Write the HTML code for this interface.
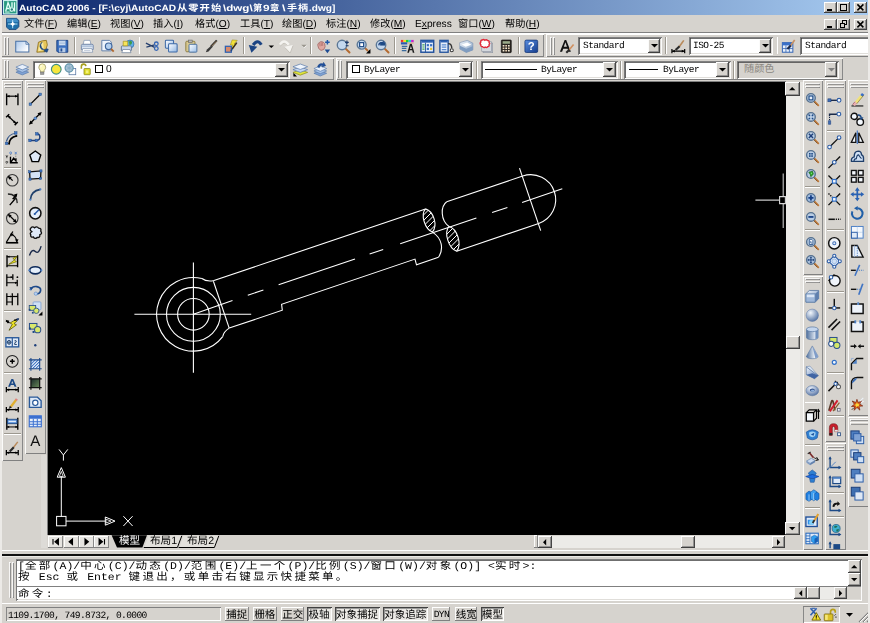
<!DOCTYPE html>
<html lang="zh-CN"><head><meta charset="utf-8"><title>AutoCAD 2006</title>
<style>
html,body{margin:0;padding:0;background:#d6d3ce;}
body{text-rendering:geometricPrecision;width:870px;height:623px;overflow:hidden;font-family:"Liberation Sans","Noto Sans CJK SC",sans-serif;font-size:10.2px;color:#000}
#scr{position:relative;width:870px;height:623px;overflow:hidden;background:#d6d3ce}
.a{position:absolute;white-space:nowrap}
svg.a{overflow:visible}
.cj{font-family:"Liberation Sans","Noto Sans CJK SC",sans-serif}
.title{background:linear-gradient(90deg,#0a246a 0%,#a6caf0 100%)}
.ttl{color:#fff;font-weight:bold;font-size:9px}
.ttl .cj{letter-spacing:0.1em}
.mn{font-size:10.2px}
.mn u{text-decoration-thickness:0.8px;text-underline-offset:1px}
.mono{font-family:"Liberation Mono",monospace;font-size:9.5px;letter-spacing:-0.55px;position:absolute;top:0;line-height:18px;white-space:nowrap}
.tb{box-shadow:inset 0.9px 0.9px 0 #fff,inset -0.9px -0.9px 0 #808080}
.gr{box-shadow:inset 0.8px 0.8px 0 #fff,inset -0.8px -0.8px 0 #808080;background:#d6d3ce}
.btn{background:#d6d3ce;box-shadow:inset -0.9px -0.9px 0 #404040,inset 0.9px 0.9px 0 #fff,inset -1.8px -1.8px 0 #808080}
.btn1{background:#d6d3ce;box-shadow:inset -0.9px -0.9px 0 #808080,inset 0.9px 0.9px 0 #fff}
.fld{background:#fff;box-shadow:inset 0.9px 0.9px 0 #808080,inset -0.9px -0.9px 0 #fff,inset 1.8px 1.8px 0 #404040,inset -1.8px -1.8px 0 #d6d3ce}
.fld.dis{background:#d6d3ce}
.trk{background:#ecebe8}
.sk1{box-shadow:inset 0.9px 0.9px 0 #808080,inset -0.9px -0.9px 0 #fff}
.sup{box-shadow:inset -0.9px -0.9px 0 #808080,inset 0.9px 0.9px 0 #fff}
.sdn{box-shadow:inset 0.9px 0.9px 0 #404040,inset -0.9px -0.9px 0 #fff,inset 1.8px 1.8px 0 #808080;background:#eae8e4}
.st{font-family:"Liberation Mono",monospace;font-size:9.6px;letter-spacing:-0.62px;white-space:pre}
.st2{font-size:10.5px}
.tabt{font-size:10.6px;line-height:12.6px;height:12.6px}
.cmd{position:absolute;left:1px;font-family:"Liberation Mono","Noto Sans CJK SC",monospace;font-size:10.4px;line-height:11px;height:11px;white-space:pre;letter-spacing:0;transform:scaleX(1.108);transform-origin:0 0}
.cmd .cj{letter-spacing:0.2em}
.ttl,.mn,.mono,.st,.st2,.cmd,.tabt{will-change:transform}
</style></head>
<body>
<div id="scr">
<div class="a title" style="left:2px;top:0px;width:866.2px;height:15.3px;"></div>
<svg class="a ic" style="left:2.9px;top:0.4px" width="14.4" height="14.4" viewBox="0 0 16 16"><rect x="0.5" y="0.5" width="15" height="15" fill="#2a9a80" stroke="#c9f1ee" stroke-width="1.4" /><path d="M3 12.6 5.6 3 8.2 9.4M3.8 9.4H7" fill="none" stroke="#e4fff8" stroke-width="1.5" /><path d="M10 2.6V8M12.8 2.6V12.8" fill="none" stroke="#e4fff8" stroke-width="1.5" /><circle cx="9.8" cy="10.6" r="2" fill="#2a7a7a" stroke="#e4fff8" stroke-width="1.2"/><path d="M2.4 13.4H7.4" fill="none" stroke="#e4fff8" stroke-width="1" /></svg>
<div class="a ttl" id="ts0" style="left:18.8px;top:0.6px;height:15px;line-height:15px;transform:scaleX(1.126);transform-origin:0 0">AutoCAD 2006 - [F:\cyj\AutoCAD</div>
<div class="a ttl" id="ts1" style="left:176.6px;top:0.6px;height:15px;line-height:15px;transform:scaleX(1.1425);transform-origin:0 0"><span class="cj">从零开始</span></div>
<div class="a ttl" id="ts2" style="left:222.6px;top:0.6px;height:15px;line-height:15px;transform:scaleX(1.287);transform-origin:0 0">\dwg\</div>
<div class="a ttl" id="ts3" style="left:252.8px;top:0.6px;height:15px;line-height:15px;transform:scaleX(1.0313);transform-origin:0 0"><span class="cj">第</span></div>
<div class="a ttl" id="ts4" style="left:263.2px;top:0.6px;height:15px;line-height:15px;transform:scaleX(1.3159);transform-origin:0 0">9</div>
<div class="a ttl" id="ts5" style="left:270.2px;top:0.6px;height:15px;line-height:15px;transform:scaleX(1.0313);transform-origin:0 0"><span class="cj">章</span></div>
<div class="a ttl" id="ts6" style="left:281.7px;top:0.6px;height:15px;line-height:15px;transform:scaleX(1.4);transform-origin:0 0">\</div>
<div class="a ttl" id="ts7" style="left:286.8px;top:0.6px;height:15px;line-height:15px;transform:scaleX(1.1223);transform-origin:0 0"><span class="cj">手柄</span></div>
<div class="a ttl" id="ts8" style="left:309.2px;top:0.6px;height:15px;line-height:15px;transform:scaleX(1.1234);transform-origin:0 0">.dwg]</div>
<div class="a btn" style="left:824.3px;top:2.2px;width:13px;height:11px;"></div>
<div class="a " style="left:827.3px;top:9.4px;width:5px;height:1.7px;background:#000"></div>
<div class="a btn" style="left:837.3px;top:2.2px;width:13px;height:11px;"></div>
<div class="a " style="left:839.5px;top:3.8px;width:7.6px;height:7.2px;border:0.9px solid #000;border-top-width:1.8px;box-sizing:border-box"></div>
<div class="a btn" style="left:853.7px;top:2.2px;width:13px;height:11px;"></div>
<svg class="a" style="left:853.7px;top:2.2px" width="13" height="11" viewBox="0 0 12.6 11"><path d="M3.2 2.4 9.2 8.4M9.2 2.4 3.2 8.4" stroke="#000" stroke-width="1.5" fill="none"/></svg>
<svg class="a ic" style="left:5.6px;top:17px" width="13.4" height="13.4" viewBox="0 0 16 16"><path d="M0.6 1.6H12.6L15.4 4.2V11.6L12 15H3.6L0.6 12z" fill="#1f6fa8" stroke="#0e3b73" stroke-width="0.9" /><path d="M1.2 2.2H12.2L14.6 4.4V6H1.2z" fill="#3f8fc8" /><path d="M8 3.4V13.4M2.4 8.4H13.6" fill="none" stroke="#bfe8ff" stroke-width="1.1" /><path d="M8 5.4 9.2 7.2 11 8.4 9.2 9.6 8 11.4 6.8 9.6 5 8.4 6.8 7.2z" fill="#fff" /></svg>
<div class="a mn" style="left:24px;top:16.8px;height:16px;line-height:16px"><span class="cj">文件</span>(<u>F</u>)</div>
<div class="a mn" style="left:66.6px;top:16.8px;height:16px;line-height:16px"><span class="cj">编辑</span>(<u>E</u>)</div>
<div class="a mn" style="left:109.9px;top:16.8px;height:16px;line-height:16px"><span class="cj">视图</span>(<u>V</u>)</div>
<div class="a mn" style="left:152.9px;top:16.8px;height:16px;line-height:16px"><span class="cj">插入</span>(<u>I</u>)</div>
<div class="a mn" style="left:194.6px;top:16.8px;height:16px;line-height:16px"><span class="cj">格式</span>(<u>O</u>)</div>
<div class="a mn" style="left:240px;top:16.8px;height:16px;line-height:16px"><span class="cj">工具</span>(<u>T</u>)</div>
<div class="a mn" style="left:282.2px;top:16.8px;height:16px;line-height:16px"><span class="cj">绘图</span>(<u>D</u>)</div>
<div class="a mn" style="left:326.3px;top:16.8px;height:16px;line-height:16px"><span class="cj">标注</span>(<u>N</u>)</div>
<div class="a mn" style="left:369.8px;top:16.8px;height:16px;line-height:16px"><span class="cj">修改</span>(<u>M</u>)</div>
<div class="a mn" style="left:414.6px;top:16.8px;height:16px;line-height:16px">E<u>x</u>press</div>
<div class="a mn" style="left:458.3px;top:16.8px;height:16px;line-height:16px"><span class="cj">窗口</span>(<u>W</u>)</div>
<div class="a mn" style="left:504.6px;top:16.8px;height:16px;line-height:16px"><span class="cj">帮助</span>(<u>H</u>)</div>
<div class="a btn" style="left:824.3px;top:18.8px;width:13px;height:11px;"></div>
<div class="a " style="left:827.3px;top:26px;width:5px;height:1.7px;background:#000"></div>
<div class="a btn" style="left:837.3px;top:18.8px;width:13px;height:11px;"></div>
<div class="a " style="left:841.5px;top:20.3px;width:5.2px;height:4.6px;border:0.9px solid #000;border-top-width:1.6px;box-sizing:border-box"></div>
<div class="a " style="left:839.7px;top:23px;width:5.2px;height:4.6px;border:0.9px solid #000;border-top-width:1.6px;box-sizing:border-box;background:#d6d3ce"></div>
<div class="a btn" style="left:853.7px;top:18.8px;width:13px;height:11px;"></div>
<svg class="a" style="left:853.7px;top:18.8px" width="13" height="11" viewBox="0 0 12.6 11"><path d="M3.2 2.4 9.2 8.4M9.2 2.4 3.2 8.4" stroke="#000" stroke-width="1.5" fill="none"/></svg>
<div class="a " style="left:0px;top:33px;width:870px;height:0.9px;background:#fff"></div>
<div class="a " style="left:0px;top:32.2px;width:870px;height:0.9px;background:#808080"></div>
<div class="a tb" style="left:1px;top:34px;width:543px;height:22.5px;"></div>
<div class="a gr" style="left:3.6px;top:36.5px;width:2.4px;height:18px;"></div>
<div class="a gr" style="left:6.8px;top:36.5px;width:2.4px;height:18px;"></div>
<svg class="a ic" style="left:14.7px;top:38.7px" width="14.6" height="14.6" viewBox="0 0 16 16"><defs><linearGradient id="gn" x1="0" y1="0" x2="1" y2="0.6"><stop offset="0" stop-color="#a9c6ea"/><stop offset="1" stop-color="#ffffff"/></linearGradient></defs><path d="M0.8 2.6H12L15.2 5.8V14.2H0.8z" fill="url(#gn)" stroke="#4a72a6" stroke-width="1.1" /><path d="M12 2.6V5.8H15.2z" fill="#f4f8fd" stroke="#4a72a6" stroke-width="0.9" /></svg>
<svg class="a ic" style="left:34.7px;top:38.7px" width="14.6" height="14.6" viewBox="0 0 16 16"><path d="M2 14.5 3.8 3.5 8 2 12.5 1.5 13.5 6.5 11 14z" fill="#e6c65a" stroke="#8a6d1c" stroke-width="0.9" /><path d="M3.5 13.5 5 5 9 3.5 9.6 12z" fill="#f7e9a6" /><path d="M8 3.8A4.2 4.2 0 1 0 12.6 10.6L14.6 11.2 13.2 14.6 9.6 13.2 11.2 12A6 6 0 0 1 6.6 4.4z" fill="#1c4f94" stroke="#0a2e63" stroke-width="0.5" /></svg>
<svg class="a ic" style="left:54.7px;top:38.7px" width="14.6" height="14.6" viewBox="0 0 16 16"><path d="M2 1.5H14V14.5H3.2L2 13.3z" fill="#3a6fc0" stroke="#1a3f80" stroke-width="1" /><rect x="4.3" y="1.8" width="7.4" height="5.2" fill="#dfeaf8" stroke="#5a80b8" stroke-width="0.5" /><path d="M5 3.4H11M5 5.2H11" fill="none" stroke="#8aa8d0" stroke-width="0.8" /><rect x="4.6" y="9.6" width="6.8" height="4.9" fill="#b9cce6" /><rect x="6" y="10.3" width="2" height="3.4" fill="#254f94" /></svg>
<div class="a " style="left:73.7px;top:37px;width:0.9px;height:17px;background:#9c988f"></div>
<div class="a " style="left:74.6px;top:37px;width:0.9px;height:17px;background:#fff"></div>
<svg class="a ic" style="left:79.7px;top:38.7px" width="14.6" height="14.6" viewBox="0 0 16 16"><path d="M4.5 1.5H11L12 6H3.5z" fill="#fff" stroke="#7f92ae" stroke-width="0.8" /><path d="M1.5 7Q1.5 5.8 3 5.8H13Q14.5 5.8 14.5 7V11.5H1.5z" fill="#dbe5f2" stroke="#6079a0" stroke-width="0.9" /><path d="M3 10.5H13L14 14.5H2z" fill="#fff" stroke="#7f92ae" stroke-width="0.8" /><path d="M4.5 12.5H11.5" fill="none" stroke="#a8b8cc" stroke-width="0.8" /><path d="M2 7.2H14V8.4H2z" fill="#9fb4d0" /></svg>
<svg class="a ic" style="left:99.7px;top:38.7px" width="14.6" height="14.6" viewBox="0 0 16 16"><path d="M2 1.5H10.5L12.5 3.5V13H2z" fill="#eef4fb" stroke="#5b7aa6" stroke-width="1" /><circle cx="9.5" cy="8" r="3.6" fill="#b4d0ee" stroke="#3f669c" stroke-width="1.3"/><path d="M12.2 10.7 15 13.8" fill="none" stroke="#b0672c" stroke-width="2" /></svg>
<svg class="a ic" style="left:119.7px;top:38.7px" width="14.6" height="14.6" viewBox="0 0 16 16"><circle cx="11" cy="5.5" r="4.3" fill="#5fb0e8" stroke="#2c6aa8" stroke-width="0.8"/><path d="M9 3Q11 4 10 6Q12 7 13 5Q14 3 12 2z" fill="#3f9a4a" /><path d="M1.5 8.5Q1.5 7.5 3 7.5H11Q12.5 7.5 12.5 8.5V12.5H1.5z" fill="#c8d6e8" stroke="#516a8e" stroke-width="0.9" /><path d="M3 11.5H11L12 15H2z" fill="#fff" stroke="#6d7f99" stroke-width="0.8" /><path d="M3.5 2.5H8.5V7.5H3.5z" fill="#f6e45a" stroke="#a38d16" stroke-width="0.7" /></svg>
<div class="a " style="left:138.5px;top:37px;width:0.9px;height:17px;background:#9c988f"></div>
<div class="a " style="left:139.4px;top:37px;width:0.9px;height:17px;background:#fff"></div>
<svg class="a ic" style="left:144.7px;top:38.7px" width="14.6" height="14.6" viewBox="0 0 16 16"><path d="M1 4.5 10.5 9.2M1.5 8.8 10.5 6.4" fill="none" stroke="#27406e" stroke-width="1.4" /><circle cx="12.4" cy="5.3" r="2" fill="none" stroke="#3565b5" stroke-width="1.4"/><circle cx="12.4" cy="10.4" r="2" fill="none" stroke="#3565b5" stroke-width="1.4"/></svg>
<svg class="a ic" style="left:164.2px;top:38.7px" width="14.6" height="14.6" viewBox="0 0 16 16"><defs><linearGradient id="gc" x1="0" y1="0" x2="1" y2="1"><stop offset="0" stop-color="#ffffff"/><stop offset="1" stop-color="#8fb5e3"/></linearGradient></defs><rect x="1.5" y="1.5" width="9" height="8.6" fill="url(#gc)" stroke="#3b68a6" stroke-width="1.1" rx="1"/><rect x="5" y="5.3" width="9.4" height="9" fill="url(#gc)" stroke="#3b68a6" stroke-width="1.1" rx="1"/></svg>
<svg class="a ic" style="left:183.7px;top:38.7px" width="14.6" height="14.6" viewBox="0 0 16 16"><path d="M2 3.5Q2 2.5 3 2.5H11Q12 2.5 12 3.5V13Q12 14 11 14H3Q2 14 2 13z" fill="#d8c890" stroke="#8a7a3c" stroke-width="1" /><rect x="5" y="1.2" width="4" height="2.6" fill="#b8b8b8" stroke="#666" stroke-width="0.7" /><defs><linearGradient id="gp" x1="0" y1="0" x2="1" y2="1"><stop offset="0" stop-color="#ffffff"/><stop offset="1" stop-color="#9cc0ea"/></linearGradient></defs><rect x="5.5" y="5.8" width="8.6" height="8.6" fill="url(#gp)" stroke="#41699c" stroke-width="1" rx="0.8"/></svg>
<svg class="a ic" style="left:204.2px;top:38.7px" width="14.6" height="14.6" viewBox="0 0 16 16"><path d="M14 1.5 7.5 8.5" fill="none" stroke="#2a2a2a" stroke-width="2.2" /><path d="M8.2 7 9.6 8.6 5 13.6 2 14.5 3.2 11.6z" fill="#3a3a3a" /><path d="M13.6 2.4 8.5 7.8" fill="none" stroke="#c9a070" stroke-width="0.8" /></svg>
<svg class="a ic" style="left:223.7px;top:38.7px" width="14.6" height="14.6" viewBox="0 0 16 16"><path d="M9 1 14.5 1.5 11 5.5 13.5 5.5 7.5 11 9.5 6.5 7 6.5z" fill="#f2e23a" stroke="#9a8a10" stroke-width="0.6" /><rect x="1.5" y="8" width="6.5" height="6.5" fill="#d98a6a" stroke="#2f62b0" stroke-width="1.4" /><path d="M14 4 9 11" fill="none" stroke="#3a2a1a" stroke-width="1.6" /><path d="M9 11 7.6 13.4" fill="none" stroke="#1d4a86" stroke-width="1.6" /></svg>
<div class="a " style="left:242.7px;top:37px;width:0.9px;height:17px;background:#9c988f"></div>
<div class="a " style="left:243.6px;top:37px;width:0.9px;height:17px;background:#fff"></div>
<svg class="a ic" style="left:248.2px;top:38.7px" width="14.6" height="14.6" viewBox="0 0 16 16"><path d="M14.6 6.4Q10.6 -0.4 5.6 6.6" fill="none" stroke="#1b4382" stroke-width="3.4" /><path d="M0.8 6.6 10.2 8.6 3.8 15z" fill="#1b4382" /></svg>
<svg class="a ic" style="left:264.2px;top:38.7px" width="14.6" height="14.6" viewBox="0 0 16 16"><path d="M5 7H11L8 10z" fill="#000" /></svg>
<svg class="a ic" style="left:278.7px;top:38.7px" width="14.6" height="14.6" viewBox="0 0 16 16"><path d="M1.4 6.4Q5.4 -0.4 10.4 6.6" fill="none" stroke="#f4f3f0" stroke-width="3.4" /><path d="M15.2 6.6 5.8 8.6 12.2 15z" fill="#f4f3f0" /><path d="M1.8 8Q5.4 1.6 9.4 7.4" fill="none" stroke="#bdb9b0" stroke-width="0.8" /><path d="M6.4 9.4 12.2 15.4 15.4 7.4" fill="none" stroke="#bdb9b0" stroke-width="0.8" /></svg>
<svg class="a ic" style="left:296.7px;top:38.7px" width="14.6" height="14.6" viewBox="0 0 16 16"><path d="M5 7H11L8 10z" fill="#fff" /><path d="M4.6 6.4H10.6L7.6 9.4z" fill="#9a968e" /></svg>
<div class="a " style="left:309.9px;top:37px;width:0.9px;height:17px;background:#9c988f"></div>
<div class="a " style="left:310.8px;top:37px;width:0.9px;height:17px;background:#fff"></div>
<svg class="a ic" style="left:315.7px;top:38.7px" width="14.6" height="14.6" viewBox="0 0 16 16"><path d="M2 7Q1.5 5 3.5 4L5 3 6.5 3 8 3.5 9.5 5 10 8.5 8.5 11.5 5.5 12.5 3 10.5z" fill="#e0a8a0" stroke="#9a5a58" stroke-width="0.8" /><path d="M4 4.5 4.5 8M5.6 3.6 6 7.6M7.2 3.8 7.4 7.6" fill="none" stroke="#9a5a58" stroke-width="0.6" /><path d="M12.5 1V6M10 3.5H15" fill="none" stroke="#2458a8" stroke-width="1.6" /><path d="M9.5 11.5H15.5L12.5 15.5z" fill="#1c4a92" /></svg>
<svg class="a ic" style="left:335.7px;top:38.7px" width="14.6" height="14.6" viewBox="0 0 16 16"><path d="M10 10 14.8 14.8" fill="none" stroke="#b46a30" stroke-width="2.2" stroke-linecap="round"/><circle cx="6.6" cy="6.6" r="5.2" fill="#c4d8ee" stroke="#5c7896" stroke-width="1.5"/><path d="M12 1.6V5.6M10 3.6H14M10.6 7.4H13.8" fill="none" stroke="#1d3a6a" stroke-width="1.3" /></svg>
<svg class="a ic" style="left:355.7px;top:38.7px" width="14.6" height="14.6" viewBox="0 0 16 16"><path d="M9.4 9.4 12.6 12.6" fill="none" stroke="#b46a30" stroke-width="2" stroke-linecap="round"/><circle cx="6.2" cy="6.2" r="4.9" fill="#c4d8ee" stroke="#5c7896" stroke-width="1.5"/><rect x="4" y="4" width="4.4" height="4.4" fill="#fff" stroke="#1d4a86" stroke-width="1.3" /><path d="M15.8 11V15.8H11z" fill="#000" /></svg>
<svg class="a ic" style="left:375.2px;top:38.7px" width="14.6" height="14.6" viewBox="0 0 16 16"><path d="M10 10 14.8 14.8" fill="none" stroke="#b46a30" stroke-width="2.2" stroke-linecap="round"/><circle cx="6.6" cy="6.6" r="5.2" fill="#c4d8ee" stroke="#5c7896" stroke-width="1.5"/><path d="M3.5 6.8Q3.8 2.8 8 3.2L9.8 2 9.4 5.6 6.2 5 7.2 4.4Q5 4.6 4.8 7z" fill="#1d3f7a" /><rect x="5.6" y="3.6" width="5.4" height="3.6" fill="#1d4a86" /></svg>
<div class="a " style="left:393.8px;top:37px;width:0.9px;height:17px;background:#9c988f"></div>
<div class="a " style="left:394.7px;top:37px;width:0.9px;height:17px;background:#fff"></div>
<svg class="a ic" style="left:400.2px;top:38.7px" width="14.6" height="14.6" viewBox="0 0 16 16"><rect x="1" y="1" width="2.8" height="2.6" fill="#e33" /><rect x="3.8" y="1" width="2.8" height="2.6" fill="#f2e020" /><rect x="6.6" y="1" width="2.8" height="2.6" fill="#2c3" /><rect x="9.4" y="1" width="2.8" height="2.6" fill="#2cd" /><rect x="12.2" y="1" width="2.8" height="2.6" fill="#c2c" /><path d="M1 3.6H8V6H1z" fill="#2b58b0" /><path d="M2 8H8M2 10.4H7M2 12.8H7" fill="none" stroke="#3a6a9c" stroke-width="1.4" /><path d="M11 5 8 15H9.8L10.6 12.4H13.4L14 15H15.8L12.8 5z" fill="#1a1a1a" /><path d="M11.9 7.4 11 11H13z" fill="#d6d3ce" /><rect x="8.6" y="3.8" width="6.4" height="1.4" fill="#d8b090" /></svg>
<svg class="a ic" style="left:419.7px;top:38.7px" width="14.6" height="14.6" viewBox="0 0 16 16"><rect x="1" y="1.5" width="14" height="13" fill="#e6eefa" stroke="#23529c" stroke-width="1.6" /><rect x="1.8" y="1.8" width="12.4" height="2.2" fill="#2c5fb0" /><path d="M6 4V14.5" fill="none" stroke="#23529c" stroke-width="1" /><path d="M2.6 6.4H5M2.6 8.8H5M2.6 11.2H5" fill="none" stroke="#3aa04a" stroke-width="1.3" /><rect x="7.4" y="5.6" width="2.4" height="2.4" fill="#3a6fc0" /><rect x="11" y="5.6" width="2.4" height="2.4" fill="#3a6fc0" /><rect x="7.4" y="9.6" width="2.4" height="2.4" fill="#3a6fc0" /><rect x="11" y="9.6" width="2.4" height="2.4" fill="#e2c23a" /></svg>
<svg class="a ic" style="left:439.4px;top:38.7px" width="14.6" height="14.6" viewBox="0 0 16 16"><rect x="1" y="1.5" width="9" height="13" fill="#e6eefa" stroke="#23529c" stroke-width="1.5" /><rect x="1.6" y="1.8" width="7.8" height="2" fill="#2c5fb0" /><path d="M3 6.4H8M3 9H8M3 11.6H8" fill="none" stroke="#5a8ad0" stroke-width="1.4" /><path d="M10 5Q14 5 14 10" fill="none" stroke="#333" stroke-width="1.5" /><circle cx="14" cy="12.4" r="1.7" fill="#fff" stroke="#333" stroke-width="1.1"/></svg>
<svg class="a ic" style="left:459.2px;top:38.7px" width="14.6" height="14.6" viewBox="0 0 16 16"><defs><linearGradient id="gs" x1="0" y1="0" x2="1" y2="1"><stop offset="0" stop-color="#f4f8fc"/><stop offset="1" stop-color="#7f9cc0"/></linearGradient></defs><path d="M0.8 4 9 1.5 15.2 4.5 15.2 12 8 14.8 0.8 11z" fill="url(#gs)" stroke="#7088a8" stroke-width="0.6" /><path d="M3 6 9 3.8 13.6 6.2 7.4 8.6z" fill="#fff" /><path d="M1 11 8 14.8 15.2 12 15.2 8 8 10.8 1 7.4z" fill="#7f9cc0" /></svg>
<svg class="a ic" style="left:478.7px;top:38.7px" width="14.6" height="14.6" viewBox="0 0 16 16"><rect x="4.5" y="4.5" width="10.5" height="10.5" fill="#c2c7cf" stroke="#8f96a2" stroke-width="0.7" /><rect x="3" y="3" width="10.5" height="10.5" fill="#d4d8de" stroke="#8f96a2" stroke-width="0.7" /><path d="M3.4 1.2Q5 0 6.4 1.4Q8 0.2 9.4 1.6Q11.4 1.6 11 3.6Q12.4 5 11 6.4Q11.6 8.4 9.6 8.4Q8.4 10 6.8 8.8Q5 10 3.8 8.4Q1.6 8.4 2 6.2Q0.6 4.8 2 3.4Q1.6 1.4 3.4 1.2z" fill="#fff" stroke="#e02a3a" stroke-width="1.6" /></svg>
<svg class="a ic" style="left:498.7px;top:38.7px" width="14.6" height="14.6" viewBox="0 0 16 16"><rect x="2.5" y="1" width="11" height="14" fill="#2a2420" stroke="#000" stroke-width="0.6" rx="1"/><rect x="4" y="2.4" width="8" height="2.8" fill="#9aaa8a" /><rect x="4.0" y="6.6" width="1.9" height="1.7" fill="#f4ecd8" /><rect x="4.0" y="9.3" width="1.9" height="1.7" fill="#e8d0b0" /><rect x="4.0" y="12.0" width="1.9" height="1.7" fill="#f4ecd8" /><rect x="6.9" y="6.6" width="1.9" height="1.7" fill="#e8d0b0" /><rect x="6.9" y="9.3" width="1.9" height="1.7" fill="#f4ecd8" /><rect x="6.9" y="12.0" width="1.9" height="1.7" fill="#e8d0b0" /><rect x="9.8" y="6.6" width="1.9" height="1.7" fill="#f4ecd8" /><rect x="9.8" y="9.3" width="1.9" height="1.7" fill="#e8d0b0" /><rect x="9.8" y="12.0" width="1.9" height="1.7" fill="#f4ecd8" /></svg>
<div class="a " style="left:517.8px;top:37px;width:0.9px;height:17px;background:#9c988f"></div>
<div class="a " style="left:518.7px;top:37px;width:0.9px;height:17px;background:#fff"></div>
<svg class="a ic" style="left:524.4px;top:38.7px" width="14.6" height="14.6" viewBox="0 0 16 16"><defs><linearGradient id="gh" x1="0" y1="0" x2="1" y2="1"><stop offset="0" stop-color="#5c8fe0"/><stop offset="1" stop-color="#143c8c"/></linearGradient></defs><rect x="1" y="1.2" width="14" height="13.6" fill="url(#gh)" stroke="#0e2f70" stroke-width="0.8" rx="1.5"/><text x="8" y="12.6" font-family="Liberation Sans,sans-serif" font-weight="bold" font-size="12.5" text-anchor="middle" fill="#fff">?</text></svg>
<div class="a tb" style="left:546px;top:34px;width:326px;height:22.5px;"></div>
<div class="a gr" style="left:549.5px;top:36.5px;width:2.4px;height:18px;"></div>
<div class="a gr" style="left:552.7px;top:36.5px;width:2.4px;height:18px;"></div>
<svg class="a ic" style="left:558.7px;top:38.7px" width="14.6" height="14.6" viewBox="0 0 16 16"><path d="M6.2 1 1 14H3.4L4.6 10.6H9.4L10.6 14H13L7.9 1zM5.3 8.6 7 3.6 8.7 8.6z" fill="#111" /><g transform="translate(1.5 2.5)"><path d="M14.5 3.5 9.5 9.5" fill="none" stroke="#d09060" stroke-width="1.8" /><path d="M10 9 6.5 12.5" fill="none" stroke="#2a2a2a" stroke-width="2.2" /></g></svg>
<div class="a fld" style="left:578px;top:37px;width:84px;height:18px;"><span class="mono" style="left:4.5px">Standard</span></div>
<div class="a btn" style="left:647.5px;top:38.7px;width:12.8px;height:14.6px;"></div>
<svg class="a" style="left:650.5px;top:44.4px" width="7" height="4" viewBox="0 0 7 4"><path d="M0 0H7L3.5 3.6z" fill="#000"/></svg>
<div class="a " style="left:665.2px;top:37px;width:0.9px;height:17px;background:#9c988f"></div>
<div class="a " style="left:666.1px;top:37px;width:0.9px;height:17px;background:#fff"></div>
<svg class="a ic" style="left:670.7px;top:38.7px" width="14.6" height="14.6" viewBox="0 0 16 16"><path d="M1 11V15.5M15 11V15.5M1.5 13.3H14.5" fill="none" stroke="#000" stroke-width="1.3" /><path d="M1.2 13.3 4.2 11.8V14.8zM14.8 13.3 11.8 11.8V14.8z" fill="#000" /><path d="M14 1.5 9 8.5" fill="none" stroke="#b88a5a" stroke-width="1.8" /><path d="M9.4 8 5 12" fill="none" stroke="#2a2a2a" stroke-width="2.4" /></svg>
<div class="a fld" style="left:688.5px;top:37px;width:84.5px;height:18px;"><span class="mono" style="left:4.5px">ISO-25</span></div>
<div class="a btn" style="left:758.5px;top:38.7px;width:12.8px;height:14.6px;"></div>
<svg class="a" style="left:761.5px;top:44.4px" width="7" height="4" viewBox="0 0 7 4"><path d="M0 0H7L3.5 3.6z" fill="#000"/></svg>
<div class="a " style="left:776.5px;top:37px;width:0.9px;height:17px;background:#9c988f"></div>
<div class="a " style="left:777.4px;top:37px;width:0.9px;height:17px;background:#fff"></div>
<svg class="a ic" style="left:781.2px;top:38.7px" width="14.6" height="14.6" viewBox="0 0 16 16"><rect x="1.5" y="4" width="11.5" height="10.5" fill="#e8f0fa" stroke="#3565b5" stroke-width="1.1" /><rect x="1.5" y="4" width="11.5" height="3" fill="#3a70c8" /><path d="M1.5 10.5H13M5.4 7V14.5M9.2 7V14.5" fill="none" stroke="#3565b5" stroke-width="0.9" /><path d="M15 1 10.4 7.4" fill="none" stroke="#c89060" stroke-width="1.8" /><path d="M10.8 7 7 11" fill="none" stroke="#1d2a4a" stroke-width="2.4" /></svg>
<div class="a fld" style="left:800px;top:37px;width:84px;height:18px;"><span class="mono" style="left:4.5px">Standard</span></div>
<div class="a tb" style="left:1px;top:57.5px;width:333px;height:22.5px;"></div>
<div class="a gr" style="left:3.6px;top:60px;width:2.4px;height:18px;"></div>
<div class="a gr" style="left:6.8px;top:60px;width:2.4px;height:18px;"></div>
<svg class="a ic" style="left:15.1px;top:62.2px" width="14.6" height="14.6" viewBox="0 0 16 16"><path d="M1 11.2 8 8.2 15 11.2 8 14.2z" fill="#7fa2d4" stroke="#5577a8" stroke-width="0.7" /><path d="M1 8.4 8 5.4 15 8.4 8 11.4z" fill="#a9c4e8" stroke="#5577a8" stroke-width="0.7" /><path d="M1 5.6 8 2.5999999999999996 15 5.6 8 8.6z" fill="#e8f0fb" stroke="#5577a8" stroke-width="0.7" /></svg>
<div class="a fld" style="left:32.8px;top:60.8px;width:257px;height:18px;"></div>
<div class="a btn" style="left:275.3px;top:62.5px;width:12.8px;height:14.6px;"></div>
<svg class="a" style="left:278.3px;top:68.2px" width="7" height="4" viewBox="0 0 7 4"><path d="M0 0H7L3.5 3.6z" fill="#000"/></svg>
<svg class="a ic" style="left:36.05px;top:63.05px" width="12.5" height="12.5" viewBox="0 0 16 16"><path d="M8 1Q3.6 1.2 3.6 5.4Q3.6 7.6 5.6 9.6V11.4H10.4V9.6Q12.4 7.6 12.4 5.4Q12.4 1.2 8 1z" fill="#fbf6b8" stroke="#8f8a5a" stroke-width="0.9" /><rect x="5.8" y="11.6" width="4.4" height="3" fill="#9a9a9a" stroke="#666" stroke-width="0.6" /><path d="M6 5.4Q6.2 3.2 8 3" fill="none" stroke="#fff" stroke-width="1" /></svg>
<svg class="a ic" style="left:50.25px;top:63.25px" width="12.5" height="12.5" viewBox="0 0 16 16"><circle cx="8" cy="8" r="6.2" fill="#f6e63c" stroke="#3f8f86" stroke-width="1.5"/></svg>
<svg class="a ic" style="left:64.45px;top:63.25px" width="12.5" height="12.5" viewBox="0 0 16 16"><rect x="6.5" y="7" width="8.5" height="8" fill="#fff" stroke="#5b7aa6" stroke-width="1" /><circle cx="6.6" cy="6.4" r="5.2" fill="#a9c2d6" stroke="#5f93a8" stroke-width="1.5"/><path d="M6.6 2.6V10.2M3 4.4 10.2 8.4M10.2 4.4 3 8.4" fill="none" stroke="#7fa9bf" stroke-width="0.9" /></svg>
<svg class="a ic" style="left:79.45px;top:63.25px" width="12.5" height="12.5" viewBox="0 0 16 16"><path d="M3 7.5V4.5Q3 1.4 6 1.4Q8.6 1.4 8.8 4" fill="none" stroke="#a8a020" stroke-width="2" /><rect x="6.4" y="7" width="8" height="8" fill="#e0de2a" stroke="#7f7a10" stroke-width="0.9" rx="0.8"/><rect x="8.8" y="9.4" width="3.2" height="3.6" fill="#f4f27a" /></svg>
<div class="a " style="left:95px;top:65.2px;width:8px;height:8px;border:1px solid #000;background:#fff;box-sizing:border-box"></div>
<div class="a mn" style="left:105.5px;top:62px;height:16px;line-height:16px">0</div>
<svg class="a ic" style="left:293.4px;top:62.2px" width="14.6" height="14.6" viewBox="0 0 16 16"><g transform="translate(-1.2 0) scale(1.15 1)"><path d="M1 11.4 8 8.4 15 11.4 8 14.4z" fill="#dfe43a" stroke="#8a8a1a" stroke-width="0.7" /><path d="M1 8.4 8 5.4 15 8.4 8 11.4z" fill="#c4d6f0" stroke="#5577a8" stroke-width="0.7" /><path d="M1 5.2 8 2.2 15 5.2 8 8.2z" fill="#f0f5fc" stroke="#5577a8" stroke-width="0.7" /></g><path d="M0.4 15.8V11.8L4.4 15.8z" fill="#000" /></svg>
<svg class="a ic" style="left:313.2px;top:62.2px" width="14.6" height="14.6" viewBox="0 0 16 16"><path d="M1 12.4 8 9.4 15 12.4 8 15.4z" fill="#7fa2d4" stroke="#5577a8" stroke-width="0.7" /><path d="M1 9.8 8 6.800000000000001 15 9.8 8 12.8z" fill="#a9c4e8" stroke="#5577a8" stroke-width="0.7" /><path d="M1 7.2 8 4.2 15 7.2 8 10.2z" fill="#e8f0fb" stroke="#5577a8" stroke-width="0.7" /><path d="M5 5.6Q6 0.8 11 2L11.6 0.4 14 4 10 5.6 10.6 4Q7.4 3.4 7 6.4z" fill="#1f4f9c" stroke="#123a78" stroke-width="0.4" /></svg>
<div class="a tb" style="left:336px;top:57.5px;width:507px;height:22.5px;"></div>
<div class="a gr" style="left:336.8px;top:60px;width:2.4px;height:18px;"></div>
<div class="a gr" style="left:340px;top:60px;width:2.4px;height:18px;"></div>
<div class="a fld" style="left:346.4px;top:60.5px;width:127px;height:18px;"><span class="a" style="left:5.3px;top:4.8px;width:8.2px;height:8.2px;border:1px solid #000;box-sizing:border-box;background:#fff"></span><span class="mono" style="left:17.5px">ByLayer</span></div>
<div class="a btn" style="left:458.9px;top:62.2px;width:12.8px;height:14.6px;"></div>
<svg class="a" style="left:461.9px;top:67.9px" width="7" height="4" viewBox="0 0 7 4"><path d="M0 0H7L3.5 3.6z" fill="#000"/></svg>
<div class="a " style="left:476.2px;top:60.5px;width:0.9px;height:18px;background:#9c988f"></div>
<div class="a " style="left:477.1px;top:60.5px;width:0.9px;height:18px;background:#fff"></div>
<div class="a fld" style="left:481px;top:60.5px;width:136.5px;height:18px;"><span class="a" style="left:4px;top:8.4px;width:51.5px;height:1px;background:#000"></span><span class="mono" style="left:60px">ByLayer</span></div>
<div class="a btn" style="left:603px;top:62.2px;width:12.8px;height:14.6px;"></div>
<svg class="a" style="left:606px;top:67.9px" width="7" height="4" viewBox="0 0 7 4"><path d="M0 0H7L3.5 3.6z" fill="#000"/></svg>
<div class="a " style="left:620px;top:60.5px;width:0.9px;height:18px;background:#9c988f"></div>
<div class="a " style="left:620.9px;top:60.5px;width:0.9px;height:18px;background:#fff"></div>
<div class="a fld" style="left:624px;top:60.5px;width:106.5px;height:18px;"><span class="a" style="left:4.5px;top:8.4px;width:29.5px;height:1px;background:#000"></span><span class="mono" style="left:38.5px">ByLayer</span></div>
<div class="a btn" style="left:716px;top:62.2px;width:12.8px;height:14.6px;"></div>
<svg class="a" style="left:719px;top:67.9px" width="7" height="4" viewBox="0 0 7 4"><path d="M0 0H7L3.5 3.6z" fill="#000"/></svg>
<div class="a " style="left:733px;top:60.5px;width:0.9px;height:18px;background:#9c988f"></div>
<div class="a " style="left:733.9px;top:60.5px;width:0.9px;height:18px;background:#fff"></div>
<div class="a fld dis" style="left:737px;top:60.5px;width:102px;height:18px;"><span class="a" style="left:7px;top:0;height:18px;line-height:18px;color:#8a8780;font-size:10.2px"><span class="cj">随颜色</span></span></div>
<div class="a btn" style="left:824.5px;top:62.2px;width:12.8px;height:14.6px;"></div>
<svg class="a" style="left:827.5px;top:67.9px" width="7" height="4" viewBox="0 0 7 4"><path d="M0 0H7L3.5 3.6z" fill="#808080"/></svg>
<div class="a tb" style="left:1.8px;top:80.4px;width:21.6px;height:380.6px;"></div>
<div class="a gr" style="left:4.3px;top:82.6px;width:16.6px;height:2.4px;"></div>
<div class="a gr" style="left:4.3px;top:85.8px;width:16.6px;height:2.4px;"></div>
<svg class="a ic" style="left:4.9px;top:92px" width="14.6" height="14.6" viewBox="0 0 16 16"><path d="M1.8 1.6V14.4M14.2 1.6V14.4" fill="none" stroke="#000" stroke-width="1.5" /><path d="M1.8 4.6H14.2" fill="none" stroke="#000" stroke-width="1.3" /><path d="M2 4.6 5 3.2V6zM14 4.6 11 3.2V6z" fill="#000" /></svg>
<svg class="a ic" style="left:4.9px;top:111.5px" width="14.6" height="14.6" viewBox="0 0 16 16"><path d="M1.2 5.8 4.6 2.4M10.6 14.4 14 11" fill="none" stroke="#000" stroke-width="1.6" /><path d="M3 4 12.4 12.8" fill="none" stroke="#000" stroke-width="1.4" /><path d="M3 4 6.6 5.2 4.6 7.4zM12.4 12.8 8.8 11.6 10.8 9.4z" fill="#000" /></svg>
<svg class="a ic" style="left:4.9px;top:130.5px" width="14.6" height="14.6" viewBox="0 0 16 16"><path d="M4.5 14Q5 7 12.5 5.5" fill="none" stroke="#000" stroke-width="1.7" /><path d="M1.5 11.5Q3.5 3.5 11.5 2.5" fill="none" stroke="#3a5a8a" stroke-width="1.3" /><circle cx="4.5" cy="14" r="1.1" fill="#000"/><circle cx="12.5" cy="5.5" r="1.1" fill="#000"/><rect x="0.40000000000000013" y="12.2" width="2.8" height="2.8" fill="#3f74c4" stroke="#1d4a86" stroke-width="0.5" /><rect x="10.4" y="0.8000000000000003" width="2.8" height="2.8" fill="#3f74c4" stroke="#1d4a86" stroke-width="0.5" /></svg>
<svg class="a ic" style="left:4.9px;top:150.3px" width="14.6" height="14.6" viewBox="0 0 16 16"><path d="M6 7.5V14H14M6 14 9.5 9 12 12V9" fill="none" stroke="#000" stroke-width="1.5" /><path d="M2 6V9M1 6L2 7.6 3 6M2 12.5A1 1 0 1 0 2.01 12.5" fill="none" stroke="#222" stroke-width="0.8" /><circle cx="6.2" cy="3.2" r="1.1" fill="none" stroke="#3f74c4" stroke-width="0.8"/><path d="M10.6 2 13 4.6M13 2 10.6 4.6" fill="none" stroke="#3f74c4" stroke-width="0.8" /><path d="M6.2 4.6V7M11.8 4.8V8.6" fill="none" stroke="#555" stroke-width="0.7" stroke-dasharray="1 1"/></svg>
<div class="a " style="left:4.3px;top:166.8px;width:16.6px;height:0.9px;background:#9c988f"></div>
<div class="a " style="left:4.3px;top:167.7px;width:16.6px;height:0.9px;background:#fff"></div>
<svg class="a ic" style="left:4.9px;top:173.1px" width="14.6" height="14.6" viewBox="0 0 16 16"><circle cx="8" cy="8" r="6.3" fill="none" stroke="#333" stroke-width="1.2"/><path d="M8.4 8.4 3.8 3.8" fill="none" stroke="#000" stroke-width="1.4" /><path d="M3.2 3.2 7.4 4.6 4.6 7.4z" fill="#000" /></svg>
<svg class="a ic" style="left:4.9px;top:192.3px" width="14.6" height="14.6" viewBox="0 0 16 16"><path d="M3.2 2.2Q12.8 2.2 13.4 12.2" fill="none" stroke="#222" stroke-width="1.4" /><path d="M12.6 3 9 7.2 11 7.6 5.2 14.4" fill="none" stroke="#000" stroke-width="1.5" /><path d="M13.6 1.6 12.6 6 9.4 3z" fill="#000" /></svg>
<svg class="a ic" style="left:4.9px;top:211.2px" width="14.6" height="14.6" viewBox="0 0 16 16"><circle cx="8" cy="8" r="6.3" fill="none" stroke="#333" stroke-width="1.2"/><path d="M3.8 3.8 12.2 12.2" fill="none" stroke="#000" stroke-width="1.4" /><path d="M3.2 3.2 7.4 4.6 4.6 7.4zM12.8 12.8 8.6 11.4 11.4 8.6z" fill="#000" /></svg>
<svg class="a ic" style="left:4.9px;top:230.1px" width="14.6" height="14.6" viewBox="0 0 16 16"><path d="M1 14H14.5" fill="none" stroke="#000" stroke-width="1.8" /><path d="M1.5 13.4 8.6 1.6" fill="none" stroke="#000" stroke-width="1.4" /><path d="M6.4 4.4Q12.4 6.6 13 13" fill="none" stroke="#000" stroke-width="1.2" /><path d="M5.4 4 9.4 4 7.6 7.2zM13.2 13.8 11 10.4 14.8 10.2z" fill="#000" /></svg>
<div class="a " style="left:4.3px;top:247.6px;width:16.6px;height:0.9px;background:#9c988f"></div>
<div class="a " style="left:4.3px;top:248.5px;width:16.6px;height:0.9px;background:#fff"></div>
<svg class="a ic" style="left:4.9px;top:253.7px" width="14.6" height="14.6" viewBox="0 0 16 16"><path d="M2.2 1.5V14.5M13.8 1.5V14.5" fill="none" stroke="#000" stroke-width="1.5" /><path d="M2 3H14M2 13H14" fill="none" stroke="#000" stroke-width="1.1" /><path d="M13 2.6 8.6 5 10.6 6.4 4 11.4 12.6 8.4 10.4 6.8z" fill="#f0e628" stroke="#5a5a00" stroke-width="0.7" /><path d="M2 3 5 2V4z" fill="#000" /></svg>
<svg class="a ic" style="left:4.9px;top:272.9px" width="14.6" height="14.6" viewBox="0 0 16 16"><path d="M2 1.5V14.5M8.6 1.5V7.4M13.4 7.4V14.5" fill="none" stroke="#000" stroke-width="1.4" /><path d="M2 4.6H8.6M2 10.8H13.4" fill="none" stroke="#000" stroke-width="1.1" /><path d="M8.6 4.6 6.2 3.4V5.8zM13.4 10.8 11 9.6V12z" fill="#000" /><circle cx="13.6" cy="4.6" r="1" fill="#000"/></svg>
<svg class="a ic" style="left:4.9px;top:291.9px" width="14.6" height="14.6" viewBox="0 0 16 16"><path d="M2 1.5V14.5M8 1.5V14.5M14 1.5V14.5" fill="none" stroke="#000" stroke-width="1.4" /><path d="M2 5H14M2 11H8" fill="none" stroke="#000" stroke-width="1.1" /><path d="M8 5 5.8 3.9V6.1zM8 5 10.2 3.9V6.1zM14 5 11.8 3.9V6.1z" fill="#000" /></svg>
<div class="a " style="left:4.3px;top:309.9px;width:16.6px;height:0.9px;background:#9c988f"></div>
<div class="a " style="left:4.3px;top:310.8px;width:16.6px;height:0.9px;background:#fff"></div>
<svg class="a ic" style="left:4.9px;top:316.5px" width="14.6" height="14.6" viewBox="0 0 16 16"><path d="M10.8 3.4 5.6 6.6 8 8 4.4 14.6 12.6 8.6 9.8 7.2 13.2 4.4z" fill="#f0e628" stroke="#4a4a00" stroke-width="0.8" /><path d="M1 4.4 5 6.4M10 3.6 15 2.2" fill="none" stroke="#000" stroke-width="1.4" /><path d="M0.6 3 4.8 4 3 7z" fill="#000" /><path d="M15.6 1.4 12.4 1.6 13.8 4.6z" fill="#1f3f7a" /></svg>
<svg class="a ic" style="left:4.9px;top:335.1px" width="14.6" height="14.6" viewBox="0 0 16 16"><rect x="1" y="3" width="14" height="10" fill="#dfe9f7" stroke="#2a5a9a" stroke-width="1.5" /><path d="M8 3V13" fill="none" stroke="#2a5a9a" stroke-width="1.3" /><circle cx="4.5" cy="8" r="2" fill="none" stroke="#1d3f6a" stroke-width="1"/><path d="M4.5 5.4V10.6M2 8H7" fill="none" stroke="#1d3f6a" stroke-width="0.8" /><path d="M10.4 6.4Q12.6 5.2 12.4 7.6Q10 8 10.6 10.4H13" fill="none" stroke="#1d3f6a" stroke-width="1" /></svg>
<svg class="a ic" style="left:4.9px;top:353.9px" width="14.6" height="14.6" viewBox="0 0 16 16"><circle cx="8" cy="8" r="6.4" fill="none" stroke="#222" stroke-width="1.1"/><path d="M8 5.4V10.6M5.4 8H10.6" fill="none" stroke="#000" stroke-width="1.6" /></svg>
<div class="a " style="left:4.3px;top:371.9px;width:16.6px;height:0.9px;background:#9c988f"></div>
<div class="a " style="left:4.3px;top:372.8px;width:16.6px;height:0.9px;background:#fff"></div>
<svg class="a ic" style="left:4.9px;top:378.4px" width="14.6" height="14.6" viewBox="0 0 16 16"><path d="M1.5 10V15.5M14.5 10V15.5M1.5 12.8H14.5" fill="none" stroke="#000" stroke-width="1.4" /><path d="M1.6 12.8 4.6 11.4V14.2zM14.4 12.8 11.4 11.4V14.2z" fill="#000" /><path d="M7 1 3.4 9.6H5.6L6.3 7.8H9.7L10.4 9.6H12.6L9 1zM6.9 6 8 3.2 9.1 6z" fill="#1d4a86" /></svg>
<svg class="a ic" style="left:4.9px;top:397.5px" width="14.6" height="14.6" viewBox="0 0 16 16"><path d="M1.5 10V15.5M14.5 10V15.5M1.5 12.8H14.5" fill="none" stroke="#000" stroke-width="1.4" /><path d="M1.6 12.8 4.6 11.4V14.2zM14.4 12.8 11.4 11.4V14.2z" fill="#000" /><path d="M12.4 1.8 6.4 9.6" fill="none" stroke="#e0b030" stroke-width="2.6" /><path d="M13 1 12 2.4" fill="none" stroke="#e08080" stroke-width="2.6" /><path d="M5.2 8.6 7.6 10.4 4.2 12z" fill="#222" /></svg>
<svg class="a ic" style="left:4.9px;top:416.1px" width="14.6" height="14.6" viewBox="0 0 16 16"><path d="M2 2V15M14 2V15" fill="none" stroke="#000" stroke-width="1.5" /><path d="M2 12H14" fill="none" stroke="#000" stroke-width="1.1" /><path d="M2 12 4.6 10.8V13.2zM14 12 11.4 10.8V13.2z" fill="#000" /><rect x="2.8" y="3.6" width="10.4" height="4.8" fill="#6fa0e0" stroke="#1d4a86" stroke-width="1" /><path d="M4 6H12" fill="none" stroke="#dfeaf8" stroke-width="1.2" /></svg>
<div class="a " style="left:4.3px;top:433.4px;width:16.6px;height:0.9px;background:#9c988f"></div>
<div class="a " style="left:4.3px;top:434.3px;width:16.6px;height:0.9px;background:#fff"></div>
<svg class="a ic" style="left:4.9px;top:441.1px" width="14.6" height="14.6" viewBox="0 0 16 16"><path d="M1.5 10V15.5M14.5 10V15.5M1.5 12.8H14.5" fill="none" stroke="#000" stroke-width="1.4" /><path d="M1.6 12.8 4.6 11.4V14.2zM14.4 12.8 11.4 11.4V14.2z" fill="#000" /><path d="M14 1 9 7.4" fill="none" stroke="#b98a5a" stroke-width="1.6" /><path d="M9.6 6.8 5.2 11.4" fill="none" stroke="#2a2a2a" stroke-width="2.4" /></svg>
<div class="a tb" style="left:24.8px;top:80.4px;width:21.4px;height:374.1px;"></div>
<div class="a gr" style="left:27.3px;top:82.6px;width:16.4px;height:2.4px;"></div>
<div class="a gr" style="left:27.3px;top:85.8px;width:16.4px;height:2.4px;"></div>
<svg class="a ic" style="left:28px;top:92px" width="14.6" height="14.6" viewBox="0 0 16 16"><path d="M3 13 13 3" fill="none" stroke="#000" stroke-width="1.4" /><rect x="1.2000000000000002" y="12.0" width="2.8" height="2.8" fill="#4f82c6" stroke="#1d4a86" stroke-width="0.5" /><rect x="12.0" y="1.2000000000000002" width="2.8" height="2.8" fill="#4f82c6" stroke="#1d4a86" stroke-width="0.5" /></svg>
<svg class="a ic" style="left:28px;top:110.96px" width="14.6" height="14.6" viewBox="0 0 16 16"><path d="M2.5 13.5 13.5 2.5" fill="none" stroke="#000" stroke-width="1.4" /><path d="M1 15 2.6 10.4 5.6 13.4zM15 1 13.4 5.6 10.4 2.6z" fill="#000" /><circle cx="8" cy="8" r="1.5" fill="#6a9be0" stroke="#1d4a86" stroke-width="0.5"/></svg>
<svg class="a ic" style="left:28px;top:129.92px" width="14.6" height="14.6" viewBox="0 0 16 16"><path d="M2 11.4H9.4A3.6 3.6 0 1 0 9.4 4.2" fill="none" stroke="#1f3f7a" stroke-width="1.6" /><rect x="0.8000000000000003" y="10.0" width="2.8" height="2.8" fill="#3f74c4" stroke="#1d4a86" stroke-width="0.5" /><rect x="7.799999999999999" y="10.0" width="2.8" height="2.8" fill="#3f74c4" stroke="#1d4a86" stroke-width="0.5" /><rect x="8.2" y="2.8000000000000003" width="2.8" height="2.8" fill="#3f74c4" stroke="#1d4a86" stroke-width="0.5" /></svg>
<svg class="a ic" style="left:28px;top:148.88px" width="14.6" height="14.6" viewBox="0 0 16 16"><path d="M8 2.2 14 6.6 11.6 13.8H4.4L2 6.6z" fill="#dfe9f7" stroke="#000" stroke-width="1.5" /></svg>
<svg class="a ic" style="left:28px;top:167.84px" width="14.6" height="14.6" viewBox="0 0 16 16"><path d="M1.8 4.2 14.2 3.2 13.8 11.4 2.2 12.2z" fill="#d4e3f6" stroke="#111" stroke-width="1.4" /><rect x="0.6000000000000001" y="3.0" width="2.4" height="2.4" fill="#3f74c4" stroke="#1d4a86" stroke-width="0.5" /><rect x="13.0" y="2.0" width="2.4" height="2.4" fill="#3f74c4" stroke="#1d4a86" stroke-width="0.5" /><rect x="12.600000000000001" y="10.200000000000001" width="2.4" height="2.4" fill="#3f74c4" stroke="#1d4a86" stroke-width="0.5" /><rect x="1.0000000000000002" y="11.0" width="2.4" height="2.4" fill="#3f74c4" stroke="#1d4a86" stroke-width="0.5" /></svg>
<svg class="a ic" style="left:28px;top:186.8px" width="14.6" height="14.6" viewBox="0 0 16 16"><path d="M2.6 14Q3 4.4 13.6 2.6" fill="none" stroke="#1f3f6a" stroke-width="1.8" /><circle cx="2.6" cy="14" r="1.2" fill="#4f82c6"/><circle cx="13.6" cy="2.6" r="1.2" fill="#4f82c6"/></svg>
<svg class="a ic" style="left:28px;top:205.76px" width="14.6" height="14.6" viewBox="0 0 16 16"><circle cx="8" cy="8" r="6.2" fill="#e4eefa" stroke="#111" stroke-width="1.7"/><path d="M7.6 8.6 12 4" fill="none" stroke="#2458a8" stroke-width="1.6" /><circle cx="7.4" cy="8.8" r="1.2" fill="#2458a8"/></svg>
<svg class="a ic" style="left:28px;top:224.72px" width="14.6" height="14.6" viewBox="0 0 16 16"><path d="M4.2 7.4Q1 5.2 3.4 3Q5 1 7.2 3Q9.6 0.8 11.6 3.4Q15 3.4 14 6.6Q16 9.6 13 10.6Q13.4 14.2 10 13.6Q7.6 16 6 13.2Q2.4 14 3 10.6Q1.4 9 4.2 7.4z" fill="#dfe9f7" stroke="#111" stroke-width="1.5" /></svg>
<svg class="a ic" style="left:28px;top:243.68px" width="14.6" height="14.6" viewBox="0 0 16 16"><path d="M1.6 12.6Q4.2 4.6 8 8.2T14.4 2.4" fill="none" stroke="#1a2a4a" stroke-width="1.5" /></svg>
<svg class="a ic" style="left:28px;top:262.64px" width="14.6" height="14.6" viewBox="0 0 16 16"><ellipse cx="8" cy="8" rx="6.2" ry="3.9" fill="#e4eefa" stroke="#0e2a5a" stroke-width="1.8"/><circle cx="1.4" cy="8" r="1.2" fill="#4f82c6"/><circle cx="14.6" cy="8" r="1.2" fill="#4f82c6"/></svg>
<svg class="a ic" style="left:28px;top:281.6px" width="14.6" height="14.6" viewBox="0 0 16 16"><path d="M3.4 7.6A5.4 4 0 1 1 8.6 13" fill="none" stroke="#1f4a8a" stroke-width="1.8" /><circle cx="3" cy="8" r="1.3" fill="#4f82c6"/><circle cx="8.6" cy="12.8" r="1.8" fill="#b8d0f0" stroke="#4f82c6" stroke-width="0.6"/><path d="M1.6 5.4 5.6 6 3.4 9z" fill="#1f4a8a" /></svg>
<svg class="a ic" style="left:28px;top:300.56px" width="14.6" height="14.6" viewBox="0 0 16 16"><rect x="5.6" y="1" width="8.6" height="8.6" fill="#cfe0f5" stroke="#7fa2d4" stroke-width="0.9" rx="1"/><g transform="translate(0 1.6) scale(0.86)"><rect x="1.6" y="3.8" width="8.2" height="6.2" fill="#d9e86a" stroke="#2a4f8a" stroke-width="1.1" /><circle cx="10.6" cy="10.6" r="3.4" fill="#d9e86a" stroke="#2a4f8a" stroke-width="1.1"/><rect x="1" y="8.2" width="2.2" height="2.2" fill="#1d4a86" /><rect x="5" y="12" width="2.2" height="2.2" fill="#1d4a86" /></g><path d="M15.8 11.4V15.8H11.4z" fill="#000" /></svg>
<svg class="a ic" style="left:28px;top:319.52px" width="14.6" height="14.6" viewBox="0 0 16 16"><rect x="1.6" y="3.8" width="8.2" height="6.2" fill="#d9e86a" stroke="#2a4f8a" stroke-width="1.1" /><circle cx="10.6" cy="10.6" r="3.4" fill="#d9e86a" stroke="#2a4f8a" stroke-width="1.1"/><rect x="1" y="8.2" width="2.2" height="2.2" fill="#1d4a86" /><rect x="5" y="12" width="2.2" height="2.2" fill="#1d4a86" /></svg>
<svg class="a ic" style="left:28px;top:338.48px" width="14.6" height="14.6" viewBox="0 0 16 16"><circle cx="8" cy="8" r="1.3" fill="#1d3f7a"/></svg>
<svg class="a ic" style="left:28px;top:357.44px" width="14.6" height="14.6" viewBox="0 0 16 16"><defs><pattern id="ph" width="2.4" height="2.4" patternUnits="userSpaceOnUse" patternTransform="rotate(-45)"><rect width="2.4" height="1.1" fill="#3f74c4"/></pattern></defs><rect x="3.2" y="3.2" width="9.6" height="9.6" fill="#e4eefa" /><rect x="3.2" y="3.2" width="9.6" height="9.6" fill="url(#ph)" /><path d="M1 3.2H15M1 12.8H15M3.2 1V15M12.8 1V15" fill="none" stroke="#1f4a8a" stroke-width="1.2" /></svg>
<svg class="a ic" style="left:28px;top:376.4px" width="14.6" height="14.6" viewBox="0 0 16 16"><defs><linearGradient id="gg" x1="0" y1="0" x2="1" y2="1"><stop offset="0" stop-color="#1a2a2a"/><stop offset="1" stop-color="#6a8a5a"/></linearGradient></defs><rect x="3.2" y="3.2" width="9.6" height="9.6" fill="url(#gg)" /><path d="M1 3.2H15M1 12.8H15M3.2 1V15M12.8 1V15" fill="none" stroke="#111" stroke-width="1.3" /></svg>
<svg class="a ic" style="left:28px;top:395.36px" width="14.6" height="14.6" viewBox="0 0 16 16"><path d="M1.6 2.4H10.4L14.4 6.4V13.6H1.6z" fill="#dfeaf8" stroke="#2a5a9a" stroke-width="1.5" /><circle cx="8" cy="8.6" r="2.9" fill="#fff" stroke="#2a5a9a" stroke-width="1.3"/></svg>
<svg class="a ic" style="left:28px;top:414.32px" width="14.6" height="14.6" viewBox="0 0 16 16"><rect x="1.4" y="2" width="13.2" height="12" fill="#e8f0fa" stroke="#3a6fd0" stroke-width="1.2" /><rect x="1.4" y="2" width="13.2" height="3.2" fill="#3a6fd0" /><path d="M1.4 8.4H14.6M1.4 11.2H14.6M5.8 5.2V14M10.2 5.2V14" fill="none" stroke="#3a6fd0" stroke-width="1.1" /></svg>
<svg class="a ic" style="left:28px;top:433.28px" width="14.6" height="14.6" viewBox="0 0 16 16"><text x="8" y="14" font-family="Liberation Sans,sans-serif" font-size="16.6" text-anchor="middle" fill="#111">A</text></svg>
<div class="a tb" style="left:802.8px;top:80.4px;width:20.2px;height:194.2px;"></div>
<div class="a gr" style="left:805.3px;top:82.6px;width:15.2px;height:2.4px;"></div>
<div class="a gr" style="left:805.3px;top:85.8px;width:15.2px;height:2.4px;"></div>
<svg class="a ic" style="left:804.7px;top:92px" width="14.6" height="14.6" viewBox="0 0 16 16"><path d="M9.8 9.8 14.6 14.6" fill="none" stroke="#c07a3a" stroke-width="2" stroke-linecap="round"/><path d="M10 11 13.6 14.6" fill="none" stroke="#5a3a1a" stroke-width="0.7" /><g transform="translate(0.7 0.7) scale(0.88)"><circle cx="6.6" cy="6.6" r="5.4" fill="#b9cde4" stroke="#55708e" stroke-width="1.7"/><rect x="4.2" y="4.2" width="4.8" height="4.8" fill="#e8f0fa" stroke="#1d4a86" stroke-width="1.4" /></g></svg>
<svg class="a ic" style="left:804.7px;top:110.9px" width="14.6" height="14.6" viewBox="0 0 16 16"><path d="M9.8 9.8 14.6 14.6" fill="none" stroke="#c07a3a" stroke-width="2" stroke-linecap="round"/><path d="M10 11 13.6 14.6" fill="none" stroke="#5a3a1a" stroke-width="0.7" /><g transform="translate(0.7 0.7) scale(0.88)"><circle cx="6.6" cy="6.6" r="5.4" fill="#b9cde4" stroke="#55708e" stroke-width="1.7"/><path d="M3.6 3.6 5.4 5.4M9.6 3.6 7.8 5.4M3.6 9.6 5.4 7.8M9.6 9.6 7.8 7.8" fill="none" stroke="#1d4a86" stroke-width="1.6" /></g></svg>
<svg class="a ic" style="left:804.7px;top:130.4px" width="14.6" height="14.6" viewBox="0 0 16 16"><path d="M9.8 9.8 14.6 14.6" fill="none" stroke="#c07a3a" stroke-width="2" stroke-linecap="round"/><path d="M10 11 13.6 14.6" fill="none" stroke="#5a3a1a" stroke-width="0.7" /><g transform="translate(0.7 0.7) scale(0.88)"><circle cx="6.6" cy="6.6" r="5.4" fill="#b9cde4" stroke="#55708e" stroke-width="1.7"/><path d="M4 4 9.2 9.2M9.2 4 4 9.2" fill="none" stroke="#1d3f7a" stroke-width="1.8" /></g></svg>
<svg class="a ic" style="left:804.7px;top:149.2px" width="14.6" height="14.6" viewBox="0 0 16 16"><path d="M9.8 9.8 14.6 14.6" fill="none" stroke="#c07a3a" stroke-width="2" stroke-linecap="round"/><path d="M10 11 13.6 14.6" fill="none" stroke="#5a3a1a" stroke-width="0.7" /><g transform="translate(0.7 0.7) scale(0.88)"><circle cx="6.6" cy="6.6" r="5.4" fill="#b9cde4" stroke="#55708e" stroke-width="1.7"/><rect x="4.2" y="4.2" width="2" height="2" fill="#1d4a86" /><rect x="7" y="4.2" width="2" height="2" fill="#1d4a86" /><rect x="4.2" y="7" width="2" height="2" fill="#1d4a86" /><rect x="7" y="7" width="2" height="2" fill="#1d4a86" /></g></svg>
<svg class="a ic" style="left:804.7px;top:167.9px" width="14.6" height="14.6" viewBox="0 0 16 16"><path d="M9.8 9.8 14.6 14.6" fill="none" stroke="#c07a3a" stroke-width="2" stroke-linecap="round"/><path d="M10 11 13.6 14.6" fill="none" stroke="#5a3a1a" stroke-width="0.7" /><g transform="translate(0.7 0.7) scale(0.88)"><circle cx="6.6" cy="6.6" r="5.4" fill="#b9cde4" stroke="#55708e" stroke-width="1.7"/><path d="M4 4.4 8.6 3.4 9.6 7 6.4 10 5.8 7.4z" fill="#2fb02f" stroke="#0e5a0e" stroke-width="0.8" /><path d="M6.4 5.4 7.6 5.2 7.4 6.6z" fill="#e8ffe8" /></g></svg>
<div class="a " style="left:805.3px;top:185.9px;width:15.2px;height:0.9px;background:#9c988f"></div>
<div class="a " style="left:805.3px;top:186.8px;width:15.2px;height:0.9px;background:#fff"></div>
<svg class="a ic" style="left:804.7px;top:192.4px" width="14.6" height="14.6" viewBox="0 0 16 16"><path d="M9.8 9.8 14.6 14.6" fill="none" stroke="#c07a3a" stroke-width="2" stroke-linecap="round"/><path d="M10 11 13.6 14.6" fill="none" stroke="#5a3a1a" stroke-width="0.7" /><g transform="translate(0.7 0.7) scale(0.88)"><circle cx="6.6" cy="6.6" r="5.4" fill="#9fbbe0" stroke="#55708e" stroke-width="1.7"/><path d="M6.6 3.4V9.8M3.4 6.6H9.8" fill="none" stroke="#163f86" stroke-width="2.2" /></g></svg>
<svg class="a ic" style="left:804.7px;top:211.2px" width="14.6" height="14.6" viewBox="0 0 16 16"><path d="M9.8 9.8 14.6 14.6" fill="none" stroke="#c07a3a" stroke-width="2" stroke-linecap="round"/><path d="M10 11 13.6 14.6" fill="none" stroke="#5a3a1a" stroke-width="0.7" /><g transform="translate(0.7 0.7) scale(0.88)"><circle cx="6.6" cy="6.6" r="5.4" fill="#b9cde4" stroke="#55708e" stroke-width="1.7"/><path d="M3.4 6.6H9.8" fill="none" stroke="#163f86" stroke-width="2.2" /></g></svg>
<div class="a " style="left:805.3px;top:229.2px;width:15.2px;height:0.9px;background:#9c988f"></div>
<div class="a " style="left:805.3px;top:230.1px;width:15.2px;height:0.9px;background:#fff"></div>
<svg class="a ic" style="left:804.7px;top:236.3px" width="14.6" height="14.6" viewBox="0 0 16 16"><path d="M9.8 9.8 14.6 14.6" fill="none" stroke="#c07a3a" stroke-width="2" stroke-linecap="round"/><path d="M10 11 13.6 14.6" fill="none" stroke="#5a3a1a" stroke-width="0.7" /><g transform="translate(0.7 0.7) scale(0.88)"><circle cx="6.6" cy="6.6" r="5.4" fill="#b9cde4" stroke="#55708e" stroke-width="1.7"/><path d="M4.6 3.4H7.6L9 4.8V9.8H4.6z" fill="#f4f8fc" stroke="#1d4a86" stroke-width="1" /><path d="M6.4 5.4V8M6.4 8H8" fill="none" stroke="#1d4a86" stroke-width="0.9" /></g></svg>
<svg class="a ic" style="left:804.7px;top:253.7px" width="14.6" height="14.6" viewBox="0 0 16 16"><path d="M9.8 9.8 14.6 14.6" fill="none" stroke="#c07a3a" stroke-width="2" stroke-linecap="round"/><path d="M10 11 13.6 14.6" fill="none" stroke="#5a3a1a" stroke-width="0.7" /><g transform="translate(0.7 0.7) scale(0.88)"><circle cx="6.6" cy="6.6" r="5.4" fill="#a9c0dc" stroke="#55708e" stroke-width="1.7"/><path d="M6.6 3V10.2M3 6.6H10.2" fill="none" stroke="#1d3f7a" stroke-width="1.2" /><path d="M6.6 2.2 8 4H5.2zM6.6 11 8 9.2H5.2zM2.2 6.6 4 5.2V8zM11 6.6 9.2 5.2V8z" fill="#1d3f7a" /></g></svg>
<div class="a tb" style="left:802.8px;top:275.6px;width:20.2px;height:274px;"></div>
<div class="a gr" style="left:805.3px;top:277.8px;width:15.2px;height:2.4px;"></div>
<div class="a gr" style="left:805.3px;top:281px;width:15.2px;height:2.4px;"></div>
<svg class="a ic" style="left:804.7px;top:289px" width="14.6" height="14.6" viewBox="0 0 16 16"><defs><linearGradient id="gb1" x1="0" y1="0" x2="1" y2="1"><stop offset="0" stop-color="#eef3fa"/><stop offset="1" stop-color="#6f8fbc"/></linearGradient></defs><path d="M1 5.2 4.8 1.6H15V10.4L11.2 14.4H1z" fill="url(#gb1)" stroke="#4f6f9c" stroke-width="0.8" /><path d="M1 5.2H11.2V14.4H1z" fill="#9fb8da" stroke="#4f6f9c" stroke-width="0.6" /><path d="M11.2 5.2 15 1.6V10.4L11.2 14.4z" fill="#5f7fae" /><path d="M2 6.2H10.2V9H2z" fill="#dbe6f5" /></svg>
<svg class="a ic" style="left:804.7px;top:307.8px" width="14.6" height="14.6" viewBox="0 0 16 16"><defs><radialGradient id="gsp" cx="0.36" cy="0.3" r="0.78"><stop offset="0" stop-color="#f4f8fd"/><stop offset="1" stop-color="#4a6a9c"/></radialGradient></defs><circle cx="8" cy="8" r="6.8" fill="url(#gsp)" stroke="#5a78a8" stroke-width="0.5"/></svg>
<svg class="a ic" style="left:804.7px;top:326.2px" width="14.6" height="14.6" viewBox="0 0 16 16"><defs><linearGradient id="gcy" x1="0" y1="0" x2="0.8" y2="0"><stop offset="0" stop-color="#4f6f9c"/><stop offset="1" stop-color="#e8eff8"/></linearGradient></defs><path d="M1.6 3.6V12.4Q1.6 15 8 15Q14.4 15 14.4 12.4V3.6z" fill="url(#gcy)" stroke="#4f6f9c" stroke-width="0.6" /><path d="M11.4 4V14.6Q14.4 14 14.4 12.4V3.6z" fill="#6f8fbc" /><ellipse cx="8" cy="3.6" rx="6.4" ry="2.6" fill="#c4d6ee" stroke="#4f6f9c" stroke-width="0.7"/></svg>
<svg class="a ic" style="left:804.7px;top:345.2px" width="14.6" height="14.6" viewBox="0 0 16 16"><defs><linearGradient id="gco" x1="0" y1="0" x2="0.75" y2="0"><stop offset="0" stop-color="#4f6f9c"/><stop offset="1" stop-color="#f4f8fc"/></linearGradient></defs><path d="M8 1 14.4 12.4Q14.4 15 8 15Q1.6 15 1.6 12.4z" fill="url(#gco)" stroke="#4f6f9c" stroke-width="0.6" /><path d="M8 1 14.4 12.4Q14.4 14 11.4 14.6z" fill="#7f9cc8" /></svg>
<svg class="a ic" style="left:804.7px;top:364.5px" width="14.6" height="14.6" viewBox="0 0 16 16"><defs><linearGradient id="gwe" x1="0" y1="0" x2="1" y2="1"><stop offset="0" stop-color="#f4f8fc"/><stop offset="1" stop-color="#4f74b0"/></linearGradient></defs><path d="M1.4 2 14.6 11.6 10.4 15 1.4 10.6z" fill="url(#gwe)" stroke="#4f6f9c" stroke-width="0.7" /><path d="M1.4 2 5.4 1.2 14.6 11.6z" fill="#dbe6f5" stroke="#4f6f9c" stroke-width="0.5" /><path d="M1.4 10.6 10.4 15 14.6 11.6 8 9z" fill="#3f64a4" /></svg>
<svg class="a ic" style="left:804.7px;top:382.9px" width="14.6" height="14.6" viewBox="0 0 16 16"><defs><radialGradient id="gto" cx="0.4" cy="0.3" r="0.8"><stop offset="0" stop-color="#eef3fa"/><stop offset="1" stop-color="#44649a"/></radialGradient></defs><ellipse cx="8" cy="8.4" rx="7" ry="5.6" fill="url(#gto)" stroke="#4f6f9c" stroke-width="0.5"/><ellipse cx="8" cy="7.8" rx="2.8" ry="1.9" fill="#3a5a94"/><ellipse cx="8.4" cy="8.4" rx="1.9" ry="1.1" fill="#8fb0dc"/></svg>
<div class="a " style="left:805.3px;top:401.5px;width:15.2px;height:0.9px;background:#9c988f"></div>
<div class="a " style="left:805.3px;top:402.4px;width:15.2px;height:0.9px;background:#fff"></div>
<svg class="a ic" style="left:804.7px;top:408.3px" width="14.6" height="14.6" viewBox="0 0 16 16"><path d="M1.4 5H9.4V14.4H1.4z" fill="#f4f8fc" stroke="#000" stroke-width="1.4" /><path d="M1.4 5 4.6 2H12.6L9.4 5M12.6 2V11.2L9.4 14.4" fill="none" stroke="#000" stroke-width="1.3" /><path d="M14.8 12V3" fill="none" stroke="#000" stroke-width="1.3" /><path d="M14.8 0.6 13 4H16.6z" fill="#000" /></svg>
<svg class="a ic" style="left:804.7px;top:426.7px" width="14.6" height="14.6" viewBox="0 0 16 16"><path d="M1.4 5.6Q8 0.6 14.6 5.6L13.4 12Q8 16 2.6 12z" fill="#2f7fd0" stroke="#1a4f9a" stroke-width="0.7" /><path d="M4.2 6.4Q8 3.6 11.8 6.4L11 10Q8 12.4 5 10z" fill="#9fd0f4" /><path d="M6.4 8.2 10.2 6.2 9.4 9.6z" fill="#1a4f9a" /></svg>
<div class="a " style="left:805.3px;top:444px;width:15.2px;height:0.9px;background:#9c988f"></div>
<div class="a " style="left:805.3px;top:444.9px;width:15.2px;height:0.9px;background:#fff"></div>
<svg class="a ic" style="left:804.7px;top:450.5px" width="14.6" height="14.6" viewBox="0 0 16 16"><path d="M4.6 1.6 9.4 7.4" fill="none" stroke="#7a2a2a" stroke-width="1.8" /><path d="M6.2 1 3 3" fill="none" stroke="#2a2a2a" stroke-width="1.2" /><path d="M1.6 11 7 8 11 10.4 5.6 13.6z" fill="#c9d9ee" stroke="#5f7fa8" stroke-width="0.7" /><path d="M1.6 11V13L5.6 15.6V13.6z" fill="#7f9cc4" /><path d="M5.6 13.6 11 10.4V12.4L5.6 15.6z" fill="#5f7fae" /><path d="M10 7.4 14.6 9.6M12.6 6.6 14.8 9.8 11.4 10.6" fill="none" stroke="#1a1a1a" stroke-width="1" /></svg>
<svg class="a ic" style="left:804.7px;top:469.3px" width="14.6" height="14.6" viewBox="0 0 16 16"><path d="M8 1 12.4 4.4 11 7H5L3.6 4.4z" fill="#2f7fd0" stroke="#1a4f9a" stroke-width="0.6" /><path d="M0.8 8.2 8 6 15.2 8.2 8 11z" fill="#1f6fe0" stroke="#0e3f9a" stroke-width="0.7" /><path d="M5 10.4H11L10 14.6H6z" fill="#2f7fd0" stroke="#1a4f9a" stroke-width="0.6" /></svg>
<svg class="a ic" style="left:804.7px;top:488px" width="14.6" height="14.6" viewBox="0 0 16 16"><path d="M1 6 4.4 3.4 7.6 5V12.4L4.4 14.6 1 12.6z" fill="#1f7fe0" stroke="#0e4f9a" stroke-width="0.6" /><path d="M6 4.6 9.6 2 13 4V11.6L9.6 14 6 11.6z" fill="#3f9ff0" stroke="#0e4f9a" stroke-width="0.6" /><path d="M10.4 6.4 13.2 4.6 15.4 6V12L13.2 13.8 10.4 12z" fill="#1f7fe0" stroke="#0e4f9a" stroke-width="0.6" /><path d="M4.4 7V14M9.6 5.6V13.4" fill="none" stroke="#bfe0ff" stroke-width="0.8" /></svg>
<div class="a " style="left:805.3px;top:507.1px;width:15.2px;height:0.9px;background:#9c988f"></div>
<div class="a " style="left:805.3px;top:508px;width:15.2px;height:0.9px;background:#fff"></div>
<svg class="a ic" style="left:804.7px;top:513.3px" width="14.6" height="14.6" viewBox="0 0 16 16"><rect x="1" y="4.4" width="12.4" height="10.4" fill="#dfeaf8" stroke="#1f4f9a" stroke-width="1.5" /><path d="M3 7.4H9.4V12.6H3z" fill="#2f8fe8" /><circle cx="7" cy="10.4" r="2.6" fill="#7fd0f8"/><path d="M14.6 1 10 8.4" fill="none" stroke="#e0a030" stroke-width="2.2" /><path d="M10.4 7.8 8.4 11" fill="none" stroke="#2a2a2a" stroke-width="2" /></svg>
<svg class="a ic" style="left:804.7px;top:531.4px" width="14.6" height="14.6" viewBox="0 0 16 16"><rect x="1" y="2.4" width="13.6" height="11.6" fill="#dfeaf8" stroke="#2f6fc0" stroke-width="1.2" /><path d="M1 5.4H5.4M1 8.4H5.4M1 11.4H5.4M5.4 2.4V14" fill="none" stroke="#2f6fc0" stroke-width="1" /><path d="M7 6.4 10.4 4.6 14 6.4V11.4L10.4 13.6 7 11.4z" fill="#2f9ff0" stroke="#1a5faa" stroke-width="0.6" /><path d="M10.4 8.4 14 6.4V11.4L10.4 13.6z" fill="#1a5fb4" /></svg>
<div class="a tb" style="left:824.5px;top:80.4px;width:21.6px;height:361.9px;"></div>
<div class="a gr" style="left:827px;top:82.6px;width:16.6px;height:2.4px;"></div>
<div class="a gr" style="left:827px;top:85.8px;width:16.6px;height:2.4px;"></div>
<svg class="a ic" style="left:827.3px;top:93.2px" width="14.6" height="14.6" viewBox="0 0 16 16"><path d="M2.4 8H13" fill="none" stroke="#1a2a4a" stroke-width="1.5" /><rect x="1" y="6.4" width="3.4" height="3.2" fill="#3f6fb8" stroke="#1d3f7a" stroke-width="0.6" /><circle cx="13.2" cy="8" r="2.1" fill="#f4f8fd" stroke="#2f5fa8" stroke-width="1.2"/></svg>
<svg class="a ic" style="left:827.3px;top:111.1px" width="14.6" height="14.6" viewBox="0 0 16 16"><path d="M2.8 5.4V3.6H12.4" fill="none" stroke="#1a2a4a" stroke-width="1.5" /><path d="M2.8 6.4V10" fill="none" stroke="#1a2a4a" stroke-width="1.2" stroke-dasharray="1.2 1.2"/><path d="M1.6 10.6H4V14.6H1.6z" fill="#3f6fb8" stroke="#1d3f7a" stroke-width="0.6" /><circle cx="13" cy="3.4" r="2.1" fill="#f4f8fd" stroke="#2f5fa8" stroke-width="1.2"/></svg>
<div class="a " style="left:827px;top:129.6px;width:16.6px;height:0.9px;background:#9c988f"></div>
<div class="a " style="left:827px;top:130.5px;width:16.6px;height:0.9px;background:#fff"></div>
<svg class="a ic" style="left:827.3px;top:135.4px" width="14.6" height="14.6" viewBox="0 0 16 16"><path d="M3.4 12.6 12.6 3.4" fill="none" stroke="#111" stroke-width="1.4" /><circle cx="2.8" cy="13.2" r="2" fill="#f4f8fd" stroke="#2f5fa8" stroke-width="1.2"/><circle cx="13.2" cy="2.8" r="2" fill="#f4f8fd" stroke="#2f5fa8" stroke-width="1.2"/></svg>
<svg class="a ic" style="left:827.3px;top:154.7px" width="14.6" height="14.6" viewBox="0 0 16 16"><path d="M1.6 14.4 14.4 1.6" fill="none" stroke="#111" stroke-width="1.5" /><circle cx="8" cy="8" r="2" fill="#f4f8fd" stroke="#2f5fa8" stroke-width="1.2"/></svg>
<svg class="a ic" style="left:827.3px;top:173.6px" width="14.6" height="14.6" viewBox="0 0 16 16"><path d="M1.6 1.6 14.4 14.4M14.4 1.6 1.6 14.4" fill="none" stroke="#111" stroke-width="1.5" /><rect x="6" y="6" width="4" height="4" fill="#f4f8fd" stroke="#2f6fc8" stroke-width="1.3" /></svg>
<svg class="a ic" style="left:827.3px;top:192.4px" width="14.6" height="14.6" viewBox="0 0 16 16"><path d="M1.6 14.4 14.4 1.6" fill="none" stroke="#111" stroke-width="1.5" /><path d="M1.6 1.6 6 6" fill="none" stroke="#111" stroke-width="1.5" stroke-dasharray="1.6 1.2"/><path d="M10 10 14.4 14.4" fill="none" stroke="#111" stroke-width="1.5" /><rect x="6" y="6" width="4" height="4" fill="#f4f8fd" stroke="#2f6fc8" stroke-width="1.3" /></svg>
<svg class="a ic" style="left:827.3px;top:211.5px" width="14.6" height="14.6" viewBox="0 0 16 16"><path d="M1.6 8H8.6" fill="none" stroke="#111" stroke-width="1.7" /><path d="M9.6 8H15" fill="none" stroke="#111" stroke-width="1.7" stroke-dasharray="1.3 1.1"/></svg>
<div class="a " style="left:827px;top:229.2px;width:16.6px;height:0.9px;background:#9c988f"></div>
<div class="a " style="left:827px;top:230.1px;width:16.6px;height:0.9px;background:#fff"></div>
<svg class="a ic" style="left:827.3px;top:235.8px" width="14.6" height="14.6" viewBox="0 0 16 16"><circle cx="8" cy="8" r="6.2" fill="#f0f4fa" stroke="#111" stroke-width="1.6"/><circle cx="8" cy="8" r="1.7" fill="#dfeaf8" stroke="#3f6fb8" stroke-width="1.1"/></svg>
<svg class="a ic" style="left:827.3px;top:254.3px" width="14.6" height="14.6" viewBox="0 0 16 16"><path d="M8 1.8 14.2 8 8 14.2 1.8 8z" fill="#e4eefa" stroke="#2f5fa8" stroke-width="1.3" /><circle cx="8" cy="2" r="1.7" fill="#f4f8fd" stroke="#2f5fa8" stroke-width="1.2"/><circle cx="14" cy="8" r="1.7" fill="#f4f8fd" stroke="#2f5fa8" stroke-width="1.2"/><circle cx="8" cy="14" r="1.7" fill="#f4f8fd" stroke="#2f5fa8" stroke-width="1.2"/><circle cx="2" cy="8" r="1.7" fill="#f4f8fd" stroke="#2f5fa8" stroke-width="1.2"/><circle cx="8" cy="8" r="2.6" fill="#cfe0f5" stroke="#7fa2d4" stroke-width="0.7"/></svg>
<svg class="a ic" style="left:827.3px;top:273.1px" width="14.6" height="14.6" viewBox="0 0 16 16"><circle cx="8.6" cy="8.6" r="5.8" fill="#f0f4fa" stroke="#111" stroke-width="1.5"/><path d="M1.6 8.6 8 1.4" fill="none" stroke="#111" stroke-width="1.1" /><circle cx="4.4" cy="4.6" r="1.9" fill="#f4f8fd" stroke="#2f5fa8" stroke-width="1.2"/></svg>
<div class="a " style="left:827px;top:290.9px;width:16.6px;height:0.9px;background:#9c988f"></div>
<div class="a " style="left:827px;top:291.8px;width:16.6px;height:0.9px;background:#fff"></div>
<svg class="a ic" style="left:827.3px;top:297px" width="14.6" height="14.6" viewBox="0 0 16 16"><path d="M1.6 12H14.4" fill="none" stroke="#111" stroke-width="1.6" /><path d="M8 2V12" fill="none" stroke="#111" stroke-width="1.6" /><circle cx="8" cy="12" r="1.9" fill="#f4f8fd" stroke="#2f5fa8" stroke-width="1.2"/></svg>
<svg class="a ic" style="left:827.3px;top:316.5px" width="14.6" height="14.6" viewBox="0 0 16 16"><path d="M1.6 11.6 11 2.2M5 14.4 14.4 5" fill="none" stroke="#111" stroke-width="1.7" /></svg>
<svg class="a ic" style="left:827.3px;top:335.8px" width="14.6" height="14.6" viewBox="0 0 16 16"><rect x="3" y="1.6" width="8" height="5.4" fill="#d4e86a" stroke="#2a4f8a" stroke-width="1.1" /><circle cx="4.6" cy="8.6" r="2.8" fill="#f4f8fd" stroke="#2a4f8a" stroke-width="1.1"/><circle cx="10.8" cy="10.2" r="3.4" fill="#d4e86a" stroke="#2a4f8a" stroke-width="1.1"/></svg>
<svg class="a ic" style="left:827.3px;top:354.6px" width="14.6" height="14.6" viewBox="0 0 16 16"><circle cx="8" cy="8" r="2.2" fill="#f4f8fd" stroke="#2f6fc8" stroke-width="1.3"/></svg>
<div class="a " style="left:827px;top:371.6px;width:16.6px;height:0.9px;background:#9c988f"></div>
<div class="a " style="left:827px;top:372.5px;width:16.6px;height:0.9px;background:#fff"></div>
<svg class="a ic" style="left:827.3px;top:378.4px" width="14.6" height="14.6" viewBox="0 0 16 16"><path d="M1.6 14.4 11.6 4.4" fill="none" stroke="#111" stroke-width="1.6" /><path d="M8.6 3.2 13 7.4" fill="none" stroke="#111" stroke-width="1.2" /><circle cx="12.6" cy="9.6" r="2.2" fill="#f4f8fd" stroke="#555" stroke-width="1.1"/><circle cx="9.4" cy="6.4" r="1.8" fill="#f4f8fd" stroke="#2f5fa8" stroke-width="1.1"/></svg>
<svg class="a ic" style="left:827.3px;top:398.1px" width="14.6" height="14.6" viewBox="0 0 16 16"><path d="M2 14 5 3.6Q5.6 2 6.6 3.6L8.6 13.6" fill="none" stroke="#5a3a2a" stroke-width="1.8" /><path d="M3 14.6 11.6 2.6" fill="none" stroke="#d02030" stroke-width="2.2" /><path d="M6.6 14.4 13.6 5" fill="none" stroke="#8a5a2a" stroke-width="1.3" /><rect x="11.6" y="11.6" width="2.8" height="2.8" fill="#f4f8fd" stroke="#667" stroke-width="0.9" /></svg>
<div class="a " style="left:827px;top:415.2px;width:16.6px;height:0.9px;background:#9c988f"></div>
<div class="a " style="left:827px;top:416.1px;width:16.6px;height:0.9px;background:#fff"></div>
<svg class="a ic" style="left:827.3px;top:421.6px" width="14.6" height="14.6" viewBox="0 0 16 16"><path d="M2.6 14.6V6.4Q2.6 1.8 7.2 1.8Q11.8 1.8 11.8 6.4V10.6H8.6V6.6Q8.6 4.8 7.2 4.8Q5.8 4.8 5.8 6.6V14.6z" fill="#c8202c" stroke="#6a0e14" stroke-width="0.6" /><rect x="2.6" y="12" width="3.2" height="2.6" fill="#2a2a2a" /><rect x="8.6" y="8.6" width="3.2" height="2" fill="#e8e8e8" /><rect x="11.6" y="11.8" width="3.2" height="3.2" fill="#f4f8fd" stroke="#3a5a8a" stroke-width="1" /></svg>
<div class="a tb" style="left:824.5px;top:443.3px;width:21.6px;height:106.3px;"></div>
<div class="a gr" style="left:827px;top:445.5px;width:16.6px;height:2.4px;"></div>
<div class="a gr" style="left:827px;top:448.7px;width:16.6px;height:2.4px;"></div>
<svg class="a ic" style="left:827.3px;top:456.3px" width="14.6" height="14.6" viewBox="0 0 16 16"><path d="M3.4 1.6V12.6H14.4" fill="none" stroke="#1d4a86" stroke-width="1.5" /><path d="M3.4 0.4 1.6 3.6H5.2zM15.8 12.6 12.6 10.8V14.4z" fill="#1d4a86" /><path d="M3.4 12.6 9.6 6.4" fill="none" stroke="#4f82c6" stroke-width="1" /><path d="M1.6 12.8 0.6 15.4" fill="none" stroke="#1d4a86" stroke-width="1.1" /></svg>
<svg class="a ic" style="left:827.3px;top:474.7px" width="14.6" height="14.6" viewBox="0 0 16 16"><path d="M3.4 1.6V12.6H14.4" fill="none" stroke="#1d4a86" stroke-width="1.5" /><path d="M3.4 0.4 1.6 3.6H5.2zM15.8 12.6 12.6 10.8V14.4z" fill="#1d4a86" /><rect x="6.4" y="2.4" width="8.6" height="7" fill="#dfeaf8" stroke="#1d4a86" stroke-width="1.3" /><rect x="6.4" y="2.4" width="8.6" height="1.8" fill="#4f82c6" /></svg>
<div class="a " style="left:827px;top:492.3px;width:16.6px;height:0.9px;background:#9c988f"></div>
<div class="a " style="left:827px;top:493.2px;width:16.6px;height:0.9px;background:#fff"></div>
<svg class="a ic" style="left:827.3px;top:498.8px" width="14.6" height="14.6" viewBox="0 0 16 16"><path d="M3.4 1.6V12.6H14.4" fill="none" stroke="#1d4a86" stroke-width="1.5" /><path d="M3.4 0.4 1.6 3.6H5.2zM15.8 12.6 12.6 10.8V14.4z" fill="#1d4a86" /><path d="M6 8.6Q6.4 3.4 11.4 4.2L11.6 2.4 14.4 5.6 11 7.6 11.2 6Q8.4 5.6 8 8.8z" fill="#111" /></svg>
<div class="a " style="left:827px;top:516.2px;width:16.6px;height:0.9px;background:#9c988f"></div>
<div class="a " style="left:827px;top:517.1px;width:16.6px;height:0.9px;background:#fff"></div>
<svg class="a ic" style="left:827.3px;top:522.7px" width="14.6" height="14.6" viewBox="0 0 16 16"><path d="M3.4 1.6V12.6H14.4" fill="none" stroke="#1d4a86" stroke-width="1.5" /><path d="M3.4 0.4 1.6 3.6H5.2zM15.8 12.6 12.6 10.8V14.4z" fill="#1d4a86" /><circle cx="10" cy="6" r="4.4" fill="#3fb0d0" stroke="#1d5a86" stroke-width="0.8"/><path d="M7.4 4.4Q9 2.4 11.6 3.6Q10.6 5.6 8.8 5.6zM10 7.4 13 6.4 12.6 9 10.6 9.6z" fill="#1d6f5a" /></svg>
<svg class="a ic" style="left:827.3px;top:540.9px" width="14.6" height="14.6" viewBox="0 0 16 16"><path d="M3.4 1.6V8" fill="none" stroke="#1d4a86" stroke-width="1.5" /><path d="M3.4 0.4 1.6 3.6H5.2z" fill="#1d4a86" /><rect x="7" y="3.4" width="7.4" height="5.6" fill="#1d4a86" /></svg>
<div class="a tb" style="left:847.6px;top:80.4px;width:24px;height:335.4px;"></div>
<div class="a gr" style="left:850.1px;top:82.6px;width:19px;height:2.4px;"></div>
<div class="a gr" style="left:850.1px;top:85.8px;width:19px;height:2.4px;"></div>
<svg class="a ic" style="left:850.3px;top:92.7px" width="14.6" height="14.6" viewBox="0 0 16 16"><path d="M1.6 14.2H14.6" fill="none" stroke="#111" stroke-width="1.2" /><path d="M13.6 2 6.4 10.6" fill="none" stroke="#f0e27a" stroke-width="3.2" /><path d="M14.4 1 12.6 3.2" fill="none" stroke="#3a6fc8" stroke-width="3.2" /><path d="M6.6 10.4 4 13.4" fill="none" stroke="#e8b0b0" stroke-width="3.2" /><path d="M15 2.4 7.4 11.8" fill="none" stroke="#7a6a2a" stroke-width="0.7" /><path d="M5.4 9.6 2.6 13" fill="none" stroke="#9a5a6a" stroke-width="0.8" /></svg>
<svg class="a ic" style="left:850.3px;top:111.6px" width="14.6" height="14.6" viewBox="0 0 16 16"><circle cx="4.6" cy="4.8" r="3.4" fill="#f4f8fd" stroke="#111" stroke-width="1.5"/><circle cx="11.2" cy="11" r="3.6" fill="#f4f8fd" stroke="#111" stroke-width="1.5"/><path d="M8.6 2.4Q12.4 2 13 6L14.8 5.6 12.6 9 10 6.4 11.6 6.2Q11 4 8.6 4z" fill="#1d4a86" /></svg>
<svg class="a ic" style="left:850.3px;top:130.4px" width="14.6" height="14.6" viewBox="0 0 16 16"><path d="M6.4 3 6.4 13.6H1.4z" fill="#f4f8fd" stroke="#111" stroke-width="1.4" /><path d="M9.6 3 9.6 13.6H14.6z" fill="#f4f8fd" stroke="#111" stroke-width="1.4" /><path d="M8 0.6V15.4" fill="none" stroke="#3f74c4" stroke-width="1.3" /></svg>
<svg class="a ic" style="left:850.3px;top:149.2px" width="14.6" height="14.6" viewBox="0 0 16 16"><path d="M1.6 13.6Q1 9.4 4.6 8.6Q4.6 2.4 9 2.4Q12.6 2.6 12.6 6.4Q15 7 14.8 10.4L14.8 13.6z" fill="#cfe0f5" stroke="#1f3f6a" stroke-width="1.5" /><path d="M4.4 13.4Q4.4 10.6 7 10.6Q7.4 6.4 9.4 6.4Q10.6 8.8 12.6 10.6" fill="none" stroke="#1f3f6a" stroke-width="1.2" /></svg>
<svg class="a ic" style="left:850.3px;top:168.5px" width="14.6" height="14.6" viewBox="0 0 16 16"><rect x="1.6" y="1.6" width="5.2" height="5.2" fill="#f4f8fd" stroke="#111" stroke-width="1.5" /><rect x="9.2" y="1.6" width="5.2" height="5.2" fill="#f4f8fd" stroke="#111" stroke-width="1.5" /><rect x="1.6" y="9.2" width="5.2" height="5.2" fill="#f4f8fd" stroke="#111" stroke-width="1.5" /><rect x="9.2" y="9.2" width="5.2" height="5.2" fill="#f4f8fd" stroke="#111" stroke-width="1.5" /></svg>
<svg class="a ic" style="left:850.3px;top:187.3px" width="14.6" height="14.6" viewBox="0 0 16 16"><path d="M8 2.6V13.4M2.6 8H13.4" fill="none" stroke="#2a62b4" stroke-width="1.9" /><path d="M8 0.4 10.6 4H5.4zM8 15.6 10.6 12H5.4zM0.4 8 4 5.4V10.6zM15.6 8 12 5.4V10.6z" fill="#2a62b4" /></svg>
<svg class="a ic" style="left:850.3px;top:206.1px" width="14.6" height="14.6" viewBox="0 0 16 16"><path d="M8 2.4A5.8 5.8 0 1 1 2.6 6" fill="none" stroke="#1f5fa8" stroke-width="2.2" /><path d="M8.4 0 8.4 5 4.4 2.6z" fill="#1f5fa8" /></svg>
<svg class="a ic" style="left:850.3px;top:225.3px" width="14.6" height="14.6" viewBox="0 0 16 16"><rect x="1.6" y="1.6" width="12.8" height="12.8" fill="#f4f8fd" stroke="#4f82c6" stroke-width="1.1" /><rect x="1.6" y="8" width="6.4" height="6.4" fill="#dfeaf8" stroke="#2f5fa8" stroke-width="1.1" /><path d="M8 1.6V8H14.4" fill="none" stroke="#8fb0dc" stroke-width="0.8" stroke-dasharray="1.2 1"/></svg>
<svg class="a ic" style="left:850.3px;top:243.9px" width="14.6" height="14.6" viewBox="0 0 16 16"><path d="M2 1.6H8L14.4 14.4H2z" fill="#e8f0fa" stroke="#111" stroke-width="1.5" /><path d="M8 1.6V14.4" fill="none" stroke="#4f82c6" stroke-width="1" stroke-dasharray="1.4 1.2"/><path d="M5 1.6V14.4" fill="none" stroke="#9ab8e0" stroke-width="0.8" /></svg>
<svg class="a ic" style="left:850.3px;top:262.5px" width="14.6" height="14.6" viewBox="0 0 16 16"><path d="M1 8H6.4" fill="none" stroke="#111" stroke-width="1.5" /><path d="M9.6 8H15" fill="none" stroke="#4f82c6" stroke-width="1.2" stroke-dasharray="1.4 1"/><path d="M10.6 2 5.4 14" fill="none" stroke="#3f74c4" stroke-width="1.7" /></svg>
<svg class="a ic" style="left:850.3px;top:281.8px" width="14.6" height="14.6" viewBox="0 0 16 16"><path d="M1 8H7" fill="none" stroke="#111" stroke-width="1.5" /><path d="M7.6 8H11.4" fill="none" stroke="#4f82c6" stroke-width="1.2" stroke-dasharray="1.4 1"/><path d="M14 2 9.6 14" fill="none" stroke="#3f74c4" stroke-width="1.8" /></svg>
<svg class="a ic" style="left:850.3px;top:300.6px" width="14.6" height="14.6" viewBox="0 0 16 16"><path d="M9.8 3.4H14.4V13.6H1.6V3.4H8.2" fill="#eef3fa" stroke="#111" stroke-width="1.6" /><rect x="8" y="1.4" width="2" height="3" fill="#4f82c6" /></svg>
<svg class="a ic" style="left:850.3px;top:319.4px" width="14.6" height="14.6" viewBox="0 0 16 16"><path d="M11.4 3.4H14.4V13.6H1.6V3.4H5.6" fill="#eef3fa" stroke="#111" stroke-width="1.6" /><rect x="4.8" y="1.4" width="2" height="3.4" fill="#4f82c6" /><rect x="10.2" y="1.4" width="2" height="3.4" fill="#4f82c6" /></svg>
<svg class="a ic" style="left:850.3px;top:338.5px" width="14.6" height="14.6" viewBox="0 0 16 16"><path d="M0.6 8H6M10 8H15.4" fill="none" stroke="#111" stroke-width="1.6" /><path d="M7.6 8 4.4 5.6V10.4zM8.4 8 11.6 5.6V10.4z" fill="#111" /></svg>
<svg class="a ic" style="left:850.3px;top:356.9px" width="14.6" height="14.6" viewBox="0 0 16 16"><path d="M1.6 14.6V7.4L7.4 1.6H14.6" fill="none" stroke="#111" stroke-width="1.5" /><path d="M2.4 7.4 7.4 2.4V7.4z" fill="#4f82c6" /><path d="M1.6 1.6H4M1.6 1.6V4" fill="none" stroke="#7fa2d4" stroke-width="0.8" /></svg>
<svg class="a ic" style="left:850.3px;top:375.7px" width="14.6" height="14.6" viewBox="0 0 16 16"><path d="M1.6 14.6V8Q1.6 1.6 8 1.6H14.6" fill="none" stroke="#111" stroke-width="1.5" /><path d="M2.4 8Q2.4 2.4 8 2.4L5.6 5.4z" fill="#4f82c6" /><path d="M2.4 8.4Q2.6 3.4 7.6 2.4Q4.6 4.6 2.4 8.4z" fill="#2f5fa8" /></svg>
<svg class="a ic" style="left:850.3px;top:396.5px" width="14.6" height="14.6" viewBox="0 0 16 16"><path d="M7.6 2.6 9 6 13 4.4 10.6 7.6 14 9.8 10 10.2 10.8 14.4 7.6 11.4 4.6 14.6 5 10.6 1.6 10.4 4.8 8 2.4 4.4 6.4 6z" fill="#d8521a" stroke="#6a1a0a" stroke-width="0.7" /><path d="M7.6 5.4 8.6 7.6 10.8 7.2 9.4 8.8 10.6 10.6 8.4 10 6.8 11.6 6.6 9.6 4.6 8.8 6.6 8z" fill="#f8d83a" /><path d="M11 4.4 14.6 1M12 6 15 4.6" fill="none" stroke="#eef3fa" stroke-width="1.1" /><path d="M2 14 4 12" fill="none" stroke="#3a2a1a" stroke-width="1" /></svg>
<div class="a tb" style="left:847.6px;top:416.8px;width:24px;height:90.5px;"></div>
<div class="a gr" style="left:850.1px;top:419px;width:19px;height:2.4px;"></div>
<div class="a gr" style="left:850.1px;top:422.2px;width:19px;height:2.4px;"></div>
<svg class="a ic" style="left:850.3px;top:429.5px" width="14.6" height="14.6" viewBox="0 0 16 16"><rect x="7" y="7" width="8" height="8" fill="#cfe0f5" stroke="#2f5fa8" stroke-width="1.1" /><rect x="1" y="1" width="9" height="9" fill="#4f7fc0" stroke="#1d3f7a" stroke-width="1.1" /><rect x="4" y="4" width="8" height="8" fill="#7fa2d4" stroke="#2f5fa8" stroke-width="1.1" /></svg>
<svg class="a ic" style="left:850.3px;top:449px" width="14.6" height="14.6" viewBox="0 0 16 16"><rect x="1" y="1" width="8" height="8" fill="#cfe0f5" stroke="#2f5fa8" stroke-width="1.1" /><rect x="4" y="4" width="8" height="8" fill="#4f7fc0" stroke="#1d3f7a" stroke-width="1.1" /><rect x="8.4" y="8.4" width="6.6" height="6.6" fill="#cfe0f5" stroke="#2f5fa8" stroke-width="1.1" /></svg>
<svg class="a ic" style="left:850.3px;top:467.5px" width="14.6" height="14.6" viewBox="0 0 16 16"><rect x="1.4" y="1.4" width="9.6" height="9.6" fill="#4f7fc0" stroke="#1d3f7a" stroke-width="1.1" /><rect x="5.4" y="6.4" width="9" height="9" fill="#cfe0f5" stroke="#2f5fa8" stroke-width="1.1" /></svg>
<svg class="a ic" style="left:850.3px;top:485.8px" width="14.6" height="14.6" viewBox="0 0 16 16"><rect x="1.4" y="1.4" width="9.6" height="9.6" fill="#3f6fb0" stroke="#1d3f7a" stroke-width="1.1" /><rect x="5.4" y="6.4" width="9" height="9" fill="#dfe8f5" stroke="#2f5fa8" stroke-width="1.1" /></svg>
<div class="a " style="left:41.4px;top:455px;width:6.2px;height:93.4px;background:#dddbd7"></div>
<div class="a " style="left:46.6px;top:81.4px;width:739.2px;height:453.8px;background:#808080"></div>
<div class="a " style="left:47.6px;top:82.4px;width:738.2px;height:452.8px;background:#000"></div>
<svg class="a" style="left:0;top:0" width="870" height="623" viewBox="0 0 870 623"><defs><clipPath id="cl1"><path d="M425.5 208.9 C420.1 215.0 425.2 229.3 432.4 232.1 C438.0 225.5 433.7 211.4 425.5 208.9z"/></clipPath><clipPath id="cl2"><path d="M449.0 226.5 C443.6 232.6 448.6 248.6 456.7 251.2 C462.0 244.6 457.6 228.9 449.0 226.5z"/></clipPath></defs><g fill="none" stroke="#fff" stroke-width="1.1" stroke-linecap="butt"><circle cx="193.4" cy="314.3" r="15.8"/><circle cx="193.4" cy="314.3" r="26.9"/><path d="M201.9 278.5 A36.8 36.8 0 1 0 222.7 336.6"/><path d="M201.9 278.5 Q206.2 281.9 213.2 280.8"/><path d="M222.7 336.6 Q223.6 331.6 229.2 328.1"/><path d="M213.4 281.3 L229.2 328.1"/><path d="M213.2 280.8 L425.5 208.9"/><path d="M229.2 328.1 L282.3 310.2 L281.6 304.3 L415.0 259.1 L416.5 264.8 L438.5 257.3"/><path d="M425.5 208.9 C420.1 215.0 425.2 229.3 432.4 232.1 C438.0 225.5 433.7 211.4 425.5 208.9"/><path d="M432.4 232.1 C442.3 238.3 443.8 249.2 438.5 257.3"/><path d="M446.7 201.8 C440.4 206.5 440.4 219.9 449.0 226.5"/><path d="M449.0 226.5 C443.6 232.6 448.6 248.6 456.7 251.2 C462.0 244.6 457.6 228.9 449.0 226.5"/><path d="M446.7 201.8 L522.7 176.0"/><path d="M456.7 251.2 L538.7 223.4"/><path d="M519.5 168.1 L540.7 230.6"/><path d="M522.7 176.0 A25.0 25.0 0 0 1 538.7 223.4"/><path d="M193.4 314.3 L232.5 300.4"/><path d="M247.8 295.3 L263.4 290.0"/><path d="M278.6 284.8 L355.0 259.0"/><path d="M369.6 254.0 L383.2 249.4"/><path d="M400.2 243.7 L476.4 217.9"/><path d="M492.1 212.6 L507.4 207.4"/><path d="M522.1 202.4 L562.3 188.8"/><path clip-path="url(#cl1)" d="M400.5 216.0 L424.5 192.0M403.2 218.8 L427.2 194.8M406.0 221.5 L430.0 197.5M408.7 224.3 L432.7 200.3M411.5 227.0 L435.5 203.0M414.2 229.8 L438.2 205.8M417.0 232.5 L441.0 208.5M419.7 235.3 L443.7 211.3M422.5 238.0 L446.5 214.0M425.2 240.8 L449.2 216.8M428.0 243.5 L452.0 219.5M430.7 246.3 L454.7 222.3M433.5 249.0 L457.5 225.0" stroke-width="1"/><path clip-path="url(#cl2)" d="M424.8 234.2 L448.8 210.2M427.5 236.9 L451.5 212.9M430.3 239.7 L454.3 215.7M433.0 242.4 L457.0 218.4M435.8 245.2 L459.8 221.2M438.5 247.9 L462.5 223.9M441.3 250.7 L465.3 226.7M444.0 253.4 L468.0 229.4M446.8 256.2 L470.8 232.2M449.5 258.9 L473.5 234.9M452.3 261.7 L476.3 237.7M455.0 264.4 L479.0 240.4M457.8 267.2 L481.8 243.2" stroke-width="1"/><path d="M134.4 314.3H251.2M193.4 262.5V372.7"/></g><g fill="none" stroke="#fff" stroke-width="1"><rect x="56.6" y="516.4" width="9.4" height="9.4"/><path d="M61.3 516.4V476.5M57.2 477.2 61.3 467.6 65.4 477.2zM66 521.1H105.5M105.3 517 115 521.1 105.3 525.2z"/><path d="M59.4 476.4 61.3 471.4 63.2 476.4zM106 519.2 111 521.1 106 523z" stroke-width="0.8"/><path d="M59 449.4 63.4 455 67.8 449.4M63.4 455V460.6M123.4 516.2 132.6 526M132.6 516.2 123.4 526"/></g><g fill="none" stroke="#c8c8c8" stroke-width="1.1"><path d="M755.4 200.1H779.6M783.2 173.4V196.6M783.2 203.6V228"/><path d="M779.6 196.6H785.4V203.6H779.6z" stroke="#d8d8d8"/></g></svg>
<div class="a " style="left:785.8px;top:82.2px;width:17px;height:453px;background:#e6e4e0"></div>
<div class="a trk" style="left:785.8px;top:82.2px;width:14.2px;height:453px;"></div>
<div class="a btn" style="left:785.4px;top:82.2px;width:14.4px;height:13.6px;"></div>
<svg class="a" style="left:789.4px;top:87.4px" width="6.4" height="3.2" viewBox="0 0 6.4 3.2"><path d="M0 3.2H6.4L3.2 0z"/></svg>
<div class="a btn" style="left:785.4px;top:521.6px;width:14.4px;height:13.6px;"></div>
<svg class="a" style="left:789.4px;top:526.8px" width="6.4" height="3.2" viewBox="0 0 6.4 3.2"><path d="M0 0H6.4L3.2 3.2z"/></svg>
<div class="a btn" style="left:785.6px;top:335.8px;width:14px;height:13.2px;"></div>
<div class="a " style="left:47.4px;top:535.2px;width:753px;height:13.4px;background:#d6d3ce"></div>
<div class="a btn1" style="left:48.2px;top:536px;width:15.3px;height:11.8px;background:#e6e4e0"></div>
<svg class="a" style="left:0;top:0" width="870" height="623"><path d="M53 539v5.6M58.4 539l-3.4 2.8 3.4 2.8z" fill="#000" stroke="#000" stroke-width="1.1"/></svg>
<div class="a btn1" style="left:63.5px;top:536px;width:15.3px;height:11.8px;background:#e6e4e0"></div>
<svg class="a" style="left:0;top:0" width="870" height="623"><path d="M72.5 539l-3.4 2.8 3.4 2.8z" fill="#000" stroke="#000" stroke-width="1.1"/></svg>
<div class="a btn1" style="left:78.8px;top:536px;width:15.3px;height:11.8px;background:#e6e4e0"></div>
<svg class="a" style="left:0;top:0" width="870" height="623"><path d="M85 539l3.4 2.8-3.4 2.8z" fill="#000" stroke="#000" stroke-width="1.1"/></svg>
<div class="a btn1" style="left:94.1px;top:536px;width:15.3px;height:11.8px;background:#e6e4e0"></div>
<svg class="a" style="left:0;top:0" width="870" height="623"><path d="M104.5 539v5.6M99.1 539l3.4 2.8-3.4 2.8z" fill="#000" stroke="#000" stroke-width="1.1"/></svg>
<svg class="a" style="left:0;top:0" width="870" height="623"><path d="M111.6 535.2 L117 547.6 H142.4 L147 535.2z" fill="#000"/><path d="M148.4 535.8 L144.2 547.5 H177.4 L181.8 535.8 M183.4 535.8 L179.2 547.5 H214.4 L218.8 535.8" fill="#e2e0db" stroke="none"/><path d="M143.8 547.5 H177.4 L181.8 535.8 M178.6 547.5 H214.4 L218.8 535.8" fill="none" stroke="#000" stroke-width="1"/></svg>
<div class="a tabt" style="left:119.4px;top:535.2px;color:#fff"><span class="cj">模型</span></div>
<div class="a tabt" style="left:149.8px;top:535.2px"><span class="cj">布局</span>1</div>
<div class="a tabt" style="left:186.6px;top:535.2px"><span class="cj">布局</span>2</div>
<div class="a trk" style="left:538px;top:535.6px;width:247.4px;height:12.6px;"></div>
<div class="a btn1" style="left:533.6px;top:535.4px;width:4.4px;height:13px;"></div>
<div class="a btn" style="left:538px;top:535.6px;width:13.8px;height:12.6px;"></div>
<svg class="a" style="left:543.3px;top:538.7px" width="3.2" height="6.4" viewBox="0 0 3.2 6.4"><path d="M3.2 0V6.4L0 3.2z"/></svg>
<div class="a btn" style="left:772px;top:535.6px;width:13.4px;height:12.6px;"></div>
<svg class="a" style="left:777.1px;top:538.7px" width="3.2" height="6.4" viewBox="0 0 3.2 6.4"><path d="M0 0V6.4L3.2 3.2z"/></svg>
<div class="a btn" style="left:681px;top:535.6px;width:13.8px;height:12.6px;"></div>
<div class="a " style="left:785.4px;top:535.2px;width:14.6px;height:13.4px;background:#d6d3ce"></div>
<div class="a " style="left:0px;top:549.6px;width:870px;height:1.3px;background:#fff"></div>
<div class="a " style="left:1.6px;top:554.4px;width:866.6px;height:1.4px;background:#111"></div>
<div class="a " style="left:0px;top:555.8px;width:870px;height:0.9px;background:#ecebe7"></div>
<div class="a gr" style="left:9px;top:562px;width:2px;height:35.5px;"></div>
<div class="a gr" style="left:12px;top:562px;width:2px;height:35.5px;"></div>
<div class="a fld" style="left:15.6px;top:558.9px;width:846px;height:42px;"></div>
<div class="a " style="left:17.3px;top:560.6px;width:830.4px;height:25.6px;background:#fff;overflow:hidden"><div class="cmd" style="top:0.4px">[<span class="cj">全部</span>(A)/<span class="cj">中心</span>(C)/<span class="cj">动态</span>(D)/<span class="cj">范围</span>(E)/<span class="cj">上一个</span>(P)/<span class="cj">比例</span>(S)/<span class="cj">窗口</span>(W)/<span class="cj">对象</span>(O)] &lt;<span class="cj">实时</span>&gt;:</div><div class="cmd" style="top:11px"><span class="cj">按</span> Esc <span class="cj">或</span> Enter <span class="cj">键退出，或单击右键显示快捷菜单。</span></div></div>
<div class="a " style="left:17.3px;top:586.1px;width:843.6px;height:0.9px;background:#808080"></div>
<div class="a " style="left:17.3px;top:587px;width:776.5px;height:12.2px;background:#fff;overflow:hidden"><div class="cmd" style="top:2.2px"><span class="cj">命令</span>:</div></div>
<div class="a trk" style="left:847.6px;top:560.2px;width:13.4px;height:26px;"></div>
<div class="a btn" style="left:847.6px;top:560.2px;width:13.4px;height:13px;"></div>
<svg class="a" style="left:851.1px;top:565.1px" width="6.4" height="3.2" viewBox="0 0 6.4 3.2"><path d="M0 3.2H6.4L3.2 0z"/></svg>
<div class="a btn" style="left:847.6px;top:573.2px;width:13.4px;height:13px;"></div>
<svg class="a" style="left:851.1px;top:578.1px" width="6.4" height="3.2" viewBox="0 0 6.4 3.2"><path d="M0 0H6.4L3.2 3.2z"/></svg>
<div class="a trk" style="left:793.8px;top:587px;width:53px;height:12.4px;"></div>
<div class="a btn" style="left:793.8px;top:587px;width:12.8px;height:12.4px;"></div>
<svg class="a" style="left:798.6px;top:590px" width="3.2" height="6.4" viewBox="0 0 3.2 6.4"><path d="M3.2 0V6.4L0 3.2z"/></svg>
<div class="a btn" style="left:806.6px;top:587px;width:13.6px;height:12.4px;"></div>
<div class="a btn" style="left:833.8px;top:587px;width:12.8px;height:12.4px;"></div>
<svg class="a" style="left:838.6px;top:590px" width="3.2" height="6.4" viewBox="0 0 3.2 6.4"><path d="M0 0V6.4L3.2 3.2z"/></svg>
<div class="a " style="left:846.8px;top:587px;width:14.2px;height:12.4px;background:#d6d3ce"></div>
<div class="a " style="left:0px;top:603.2px;width:870px;height:0.9px;background:#fff"></div>
<div class="a sk1" style="left:5.6px;top:606.8px;width:215.4px;height:14.4px;"><div class="a st" style="left:2.2px;top:0.8px;line-height:15px">1109.1700, 749.8732, 0.0000</div></div>
<div class="a sup" style="left:225px;top:607px;width:23.5px;height:14px;"><span class="a st2" style="left:0;width:100%;text-align:center;top:0.7px;line-height:14.6px"><span class="cj">捕捉</span></span></div>
<div class="a sup" style="left:253px;top:607px;width:23.5px;height:14px;"><span class="a st2" style="left:0;width:100%;text-align:center;top:0.7px;line-height:14.6px"><span class="cj">栅格</span></span></div>
<div class="a sup" style="left:280.6px;top:607px;width:23.4px;height:14px;"><span class="a st2" style="left:0;width:100%;text-align:center;top:0.7px;line-height:14.6px"><span class="cj">正交</span></span></div>
<div class="a sdn" style="left:307.4px;top:607px;width:24.2px;height:14px;"><span class="a st2" style="left:0;width:100%;text-align:center;top:0.7px;line-height:14.6px"><span class="cj">极轴</span></span></div>
<div class="a sdn" style="left:335.4px;top:607px;width:44.2px;height:14px;"><span class="a st2" style="left:0;width:100%;text-align:center;top:0.7px;line-height:14.6px"><span class="cj">对象捕捉</span></span></div>
<div class="a sdn" style="left:383.4px;top:607px;width:44.3px;height:14px;"><span class="a st2" style="left:0;width:100%;text-align:center;top:0.7px;line-height:14.6px"><span class="cj">对象追踪</span></span></div>
<div class="a sup" style="left:431.5px;top:607px;width:18.9px;height:14px;"><span class="a mono" style="left:0;width:100%;text-align:center;top:0.6px;line-height:14.6px;font-size:9.6px">DYN</span></div>
<div class="a sup" style="left:454.6px;top:607px;width:22.4px;height:14px;"><span class="a st2" style="left:0;width:100%;text-align:center;top:0.7px;line-height:14.6px"><span class="cj">线宽</span></span></div>
<div class="a sdn" style="left:481.4px;top:607px;width:23px;height:14px;"><span class="a st2" style="left:0;width:100%;text-align:center;top:0.7px;line-height:14.6px"><span class="cj">模型</span></span></div>
<div class="a sk1" style="left:803px;top:606px;width:37px;height:17px;"></div>
<svg class="a ic" style="left:807.3px;top:607.3px" width="14" height="14" viewBox="0 0 16 16"><path d="M4 1.5 11 9.5M11 1.5 4 9.5" fill="none" stroke="#2f5fb0" stroke-width="1.8" /><path d="M5.5 1.5H9.5" fill="none" stroke="#2f5fb0" stroke-width="1.2" /><path d="M10.6 6.4 15.6 15H5.6z" fill="#f6e02a" stroke="#5a5200" stroke-width="0.9" /><path d="M10.6 9.4V12.2M10.6 13V14" fill="none" stroke="#000" stroke-width="1.2" /></svg>
<svg class="a ic" style="left:823.3px;top:607.5px" width="14" height="14" viewBox="0 0 16 16"><path d="M8.6 7V4.6Q8.6 1.6 11.4 1.6Q14 1.6 14 4.4V5.4" fill="none" stroke="#b8a01a" stroke-width="1.9" /><rect x="1.4" y="6.8" width="10" height="7.8" fill="#dcc12a" stroke="#7a6a10" stroke-width="0.9" rx="0.8"/><rect x="2.4" y="7.8" width="3" height="5.8" fill="#f4e67a" /><path d="M13 8.8 14.8 7M13.6 10.4H15.8" fill="none" stroke="#000" stroke-width="0.7" /></svg>
<svg class="a" style="left:845.6px;top:612.6px" width="7" height="4" viewBox="0 0 7 4"><path d="M0 0H7L3.5 3.8z"/></svg>
<svg class="a" style="left:858px;top:611px" width="12" height="12" viewBox="0 0 12 12"><path d="M11 1 1 11M11 5 5 11M11 9 9 11" stroke="#808080" stroke-width="1.1"/><path d="M12 1 2 11M12 5 6 11M12 9 10 11" stroke="#fff" stroke-width="0.9"/></svg>
<div class="a " style="left:0px;top:0px;width:1.7px;height:623px;background:#eceae7"></div>
<div class="a " style="left:868.3px;top:0px;width:1.7px;height:623px;background:#eceae7"></div>
</div>
</body></html>
